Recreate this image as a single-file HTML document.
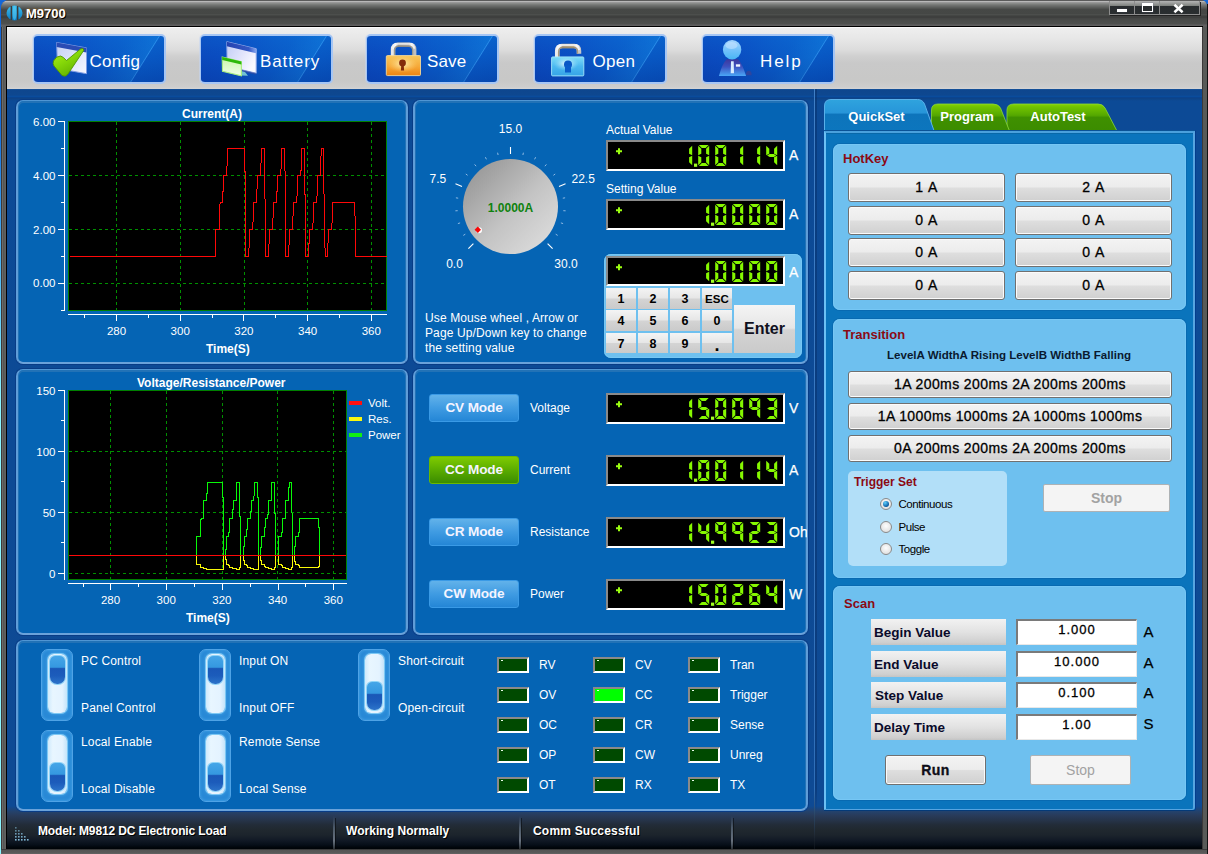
<!DOCTYPE html><html><head><meta charset="utf-8"><title>M9700</title><style>
*{box-sizing:border-box;margin:0;padding:0}
html,body{width:1208px;height:854px;overflow:hidden}
body{position:relative;background:linear-gradient(#1466d6 0,#1a70da 15%,#4ab0f0 30%,#8af4ff 47%,#8af4ff 100%);font-family:"Liberation Sans",sans-serif;font-size:12px;color:#fff}
div{position:absolute;white-space:nowrap}
svg{position:absolute;overflow:visible}
.t{line-height:14px;font-size:12px;color:#fff}
.tb{line-height:14px;font-size:12px;font-weight:bold;color:#fff}
.ax{line-height:12px;font-size:11.5px;color:#fff}
.panel{background:#0564b4;border-style:solid;border-width:1px 2px 2px 2px;border-color:#4f96d4 #5f9dd8 #6aa2da #5f9dd8;border-radius:7px;box-shadow:inset 0 1px 0 1px #2272b6,0 0 0 1px #083c86}
.tbtn{border-style:solid;border-color:#a6c6f4;border-width:2px 2px 2px 1px;box-shadow:-1px 0 0 rgba(196,214,242,.55);border-radius:5px;background:linear-gradient(rgba(20,160,255,.14) 0,rgba(0,0,0,0) 45%,rgba(0,10,90,.16) 100%),linear-gradient(122deg,#0a48bc 0%,#0a4ec2 30%,#0a5cc8 60%,#0d6ad0 78.4%,#2a8ae6 79.0%,#0858c4 79.7%,#0854c0 100%);overflow:hidden}
.tbtn span{position:absolute;font-size:17px;line-height:20px;color:#fff;top:17px}
.gb{background:#6ec0ef;border-radius:7px;box-shadow:inset 0 0 0 1px #76c7f5,0 0 0 1px rgba(4,92,160,.4)}
.wbtn{border:1px solid #707070;border-radius:3px;background:linear-gradient(#f3f3f3 0%,#ececec 48%,#dedede 52%,#d0d0d0 100%);box-shadow:inset 0 0 0 1px #fbfbfb;color:#000;text-align:center;font-size:14px;letter-spacing:.4px;-webkit-text-stroke:.3px #000}
.key{background:linear-gradient(#f4f4f4 0%,#e6e6e6 48%,#d4d4d4 52%,#cacaca 100%);color:#000;text-align:center;font-weight:bold;font-size:12.5px;line-height:22px}
.lab{background:linear-gradient(#f2f2f2 0%,#e2e2e2 50%,#cfcfcf 90%,#c4c4c4 100%);color:#0a0a2a;font-weight:bold;font-size:13.5px;line-height:27px}
.inp{background:#fff;border-top:2px solid #7a7a7a;border-left:2px solid #7a7a7a;border-right:1px solid #e8e8e8;border-bottom:1px solid #e8e8e8;color:#000;text-align:center;font-size:13px;line-height:17.5px;letter-spacing:1px;-webkit-text-stroke:.3px #000}
.disp{background:#000;border-top:2px solid #8a8a8a;border-left:2px solid #8a8a8a;border-right:2px solid #fff;border-bottom:2px solid #fff}
.led{background:#004a00;border-top:2px solid #8a8a8a;border-left:2px solid #8a8a8a;border-right:2px solid #fff;border-bottom:2px solid #fff}
.mode{border-radius:3px;color:#f4f4ff;font-weight:bold;font-size:13.6px;letter-spacing:-.15px;line-height:26.5px;text-align:center}
.mb{background:linear-gradient(#62b2ea 0%,#3f9be2 50%,#2486d6 100%);border:1px solid #3a9ae6}
.mg{background:linear-gradient(#7fcb00 0%,#5aac00 50%,#3b8c00 100%);border:1px solid #6ab800}
.sw{background:#2989d6;border:1px solid #4fa3e6;border-radius:7px;box-shadow:inset 0 0 2px 1px #3797e0}
.slot{background:linear-gradient(90deg,#cfeafc 0%,#e8f6ff 25%,#e4f3ff 75%,#c4e4fa 100%);border-radius:6px;box-shadow:0 0 0 1px #7cc8f4,0 0 3px 1px #4aa8ea}
.knobb{border-radius:5px 5px 7px 7px;background:linear-gradient(#45a6e8 0%,#3598e0 40%,#1a57b7 45%,#1c5cbb 70%,#2c74ca 100%);box-shadow:0 0 0 1px #8fd4f8}
.unit{font-size:14px;line-height:14px;color:#fff;-webkit-text-stroke:.25px #fff}
.mar{color:#8b0a14;font-weight:bold}
</style></head><body>
<div style="left:1207px;top:4px;width:1px;height:850px;background:#111"></div>
<div style="left:1px;top:0px;width:1206px;height:854px;background:#555;border-radius:8px 6px 0 0"></div>
<div style="left:1px;top:0px;width:1206px;height:27px;border-radius:8px 6px 0 0;background:linear-gradient(#5a5a5a 0.5px,#b8b8b8 1.5px,#989898 2.5px,#888a88 3.5px,#7a7c7a 4.5px,#6e706e 5.5px,#646664 6.5px,#5a5c5a 7.5px,#505250 8.5px,#464846 9.5px,#454745 13.5px,#4c4e4c 14.5px,#444644 15.5px,#3e3f3e 16.5px,#3e3f3e 17.5px,#454645 18.5px,#4a4c4a 20.5px,#4e504e 23.5px,#585858 24.5px,#606060 25.5px,#5c5c5c 27px)"></div>
<div style="left:6px;top:26px;width:1197px;height:1px;background:#000"></div>
<div style="left:1px;top:27px;width:6px;height:827px;background:linear-gradient(90deg,#3c3838 0,#3c3838 1px,#6a6a6a 1px,#6a6a6a 2px,#545654 2px,#545654 3px,#5c5c5c 3px,#5c5c5c 4px,#606060 4px,#606060 5px,#000 5px)"></div>
<div style="left:1202px;top:27px;width:5px;height:827px;background:linear-gradient(90deg,#3c3a3a 0,#3c3a3a 1px,#585a58 1px,#585a58 5px)"></div>
<div style="left:1px;top:849px;width:1206px;height:5px;background:linear-gradient(#222 0,#555 1px,#5a5a5a 4px,#666 5px)"></div>
<svg style="left:6px;top:5px" width="17" height="16" viewBox="0 0 17 16"><defs><linearGradient id="ig" x1="0" x2="0" y1="0" y2="1"><stop offset="0" stop-color="#3ec0f0"/><stop offset="1" stop-color="#0a78c0"/></linearGradient></defs><ellipse cx="8.5" cy="8" rx="8" ry="7.6" fill="url(#ig)"/><rect x="4.6" y="1" width="1.6" height="14" fill="#3b3b3b"/><rect x="10.8" y="1" width="1.6" height="14" fill="#3b3b3b"/><ellipse cx="8.5" cy="8" rx="2" ry="7" fill="#5ad0f8" opacity=".55"/></svg>
<div style="left:26px;top:6px;font-weight:bold;font-size:13px;line-height:15px;color:#fff;text-shadow:1px 1px 0 #000,0 0 2px #c07000">M9700</div>
<div style="left:1109px;top:1px;width:26px;height:14px;border:1px solid #8c8c8c;border-top:none;box-shadow:1px 1px 0 #222;background:linear-gradient(#b4b4b4 0,#7c807c 5px,#282c2e 5px,#2a2e30 100%)"><div style="left:7px;top:8px;width:10px;height:3px;background:#fff;box-shadow:0 0 1px #668"></div></div>
<div style="left:1134px;top:1px;width:26px;height:14px;border:1px solid #8c8c8c;border-top:none;box-shadow:1px 1px 0 #222;background:linear-gradient(#b4b4b4 0,#7c807c 5px,#282c2e 5px,#2a2e30 100%)"><div style="left:7px;top:2px;width:11px;height:9px;border:1px solid #fff;border-top:3px solid #fff;box-shadow:0 0 1px #668"></div></div>
<div style="left:1159px;top:1px;width:41px;height:14px;border:1px solid #8c8c8c;border-top:none;box-shadow:1px 1px 0 #222;background:linear-gradient(#b4b4b4 0,#7c807c 5px,#282c2e 5px,#2a2e30 100%)"><svg style="left:13px;top:3px" width="11" height="9" viewBox="0 0 11 9"><path d="M1.4 0.8 L9.6 8.2 M9.6 0.8 L1.4 8.2" stroke="#fff" stroke-width="2.5"/></svg></div>
<div style="left:7px;top:27px;width:1195px;height:62px;background:linear-gradient(#fafafa 0,#fafafa 1px,#eeeeee 1.5px,#e6e6e6 13px,#dcdcdc 23px,#d0d0d0 29px,#c9c9c9 36px,#c8c8c7 53px,#cdcdcd 60px,#d4d4d6 62px)"></div>
<div style="left:7px;top:89px;width:1195px;height:760px;background:linear-gradient(#1a58a0 0,#0e468e 1px,#0e4890 6px,#0a4c9c 7.5px,#0a4490 8.5px,#0e4488 9.5px,#0c4a96 12px,#0e4a94 717px,#24426c 722.5px,#283c5c 726px,#26344a 731px,#222c38 736px,#20282f 741px,#1c242c 746px,#121a26 751px,#060e18 756px,#000408 759px)"></div>
<div class="tbtn" style="left:33px;top:34px;width:133px;height:50px"><div style="left:0;top:-1px;width:130px;height:48px"><svg style="left:19px;top:7px" width="38" height="38" viewBox="0 0 38 38">
<defs><linearGradient id="cg1" x1="0" y1="0" x2="1" y2="1"><stop offset="0" stop-color="#c4d0f4"/><stop offset="1" stop-color="#f6f6ff"/></linearGradient>
<linearGradient id="cg2" x1="0" y1="0" x2=".6" y2="1"><stop offset="0" stop-color="#b4f020"/><stop offset=".5" stop-color="#86d808"/><stop offset="1" stop-color="#62b000"/></linearGradient></defs>
<path d="M3.6 0.5 L33.5 5.9 L33.5 31.7 L4.5 26.5 Z" fill="url(#cg1)" stroke="#7f9ce4" stroke-width="1"/>
<path d="M3.6 0.5 L33.5 5.9 L33.5 10.4 L3.6 5 Z" fill="#2a4cb4"/>
<path d="M0.5 19 Q3 14 7.5 14 Q10 14.5 13.5 18.5 L27.5 7 Q30 5.5 31 8 L15 32 Q12.5 35.5 9 33.5 L1 24 Q-0.5 21.5 0.5 19 Z" fill="url(#cg2)" stroke="#4f9400" stroke-width=".9"/>
</svg><span style="left:55.5px;letter-spacing:0.25px">Config</span></div></div>
<div class="tbtn" style="left:200px;top:34px;width:133px;height:50px"><div style="left:0;top:-1px;width:130px;height:48px"><svg style="left:20px;top:6px" width="38" height="38" viewBox="0 0 38 38">
<defs><linearGradient id="bg1" x1="0" y1="0" x2="1" y2=".6"><stop offset="0" stop-color="#c0ccf4"/><stop offset=".6" stop-color="#e4e6fc"/><stop offset="1" stop-color="#fafaff"/></linearGradient>
<linearGradient id="bg2" x1="0" y1="0" x2="0" y2="1"><stop offset="0" stop-color="#c8f4a8"/><stop offset="1" stop-color="#f0ffe8"/></linearGradient>
<linearGradient id="bg3" x1="0" y1="0" x2="1" y2="0"><stop offset="0" stop-color="#2442b0"/><stop offset=".75" stop-color="#3558c4"/><stop offset="1" stop-color="#86a6ee"/></linearGradient></defs>
<path d="M5.8 0.7 L35.2 7.7 L35.2 32.2 L6.2 25.3 Z" fill="url(#bg1)" stroke="#90a8e8" stroke-width="1"/>
<path d="M5.8 0.7 L35.2 7.7 L35.2 12.3 L5.8 5.3 Z" fill="url(#bg3)"/>
<path d="M20.4 30.5 L35 33.8 L35 32 L20.4 28.6Z" fill="#3a4a9a" opacity=".55"/>
<path d="M20 34.5 L27 34.8 L24 31 L20 30Z" fill="#8ee0d8" opacity=".8"/>
<path d="M1.2 16 L20.4 20.6 L20.4 34.9 L1.5 30.3 Z" fill="url(#bg2)" stroke="#a8ec80" stroke-width="1.1"/>
<path d="M1.2 16 L20.4 20.6 L20.4 23.5 L1.2 18.9 Z" fill="#2cb808"/>
</svg><span style="left:59px;letter-spacing:0.9px">Battery</span></div></div>
<div class="tbtn" style="left:366px;top:34px;width:133px;height:50px"><div style="left:0;top:-1px;width:130px;height:48px"><svg style="left:19px;top:7px" width="38" height="36" viewBox="0 0 38 36">
<defs><linearGradient id="sg1" x1="0" y1="0" x2="0" y2="1"><stop offset="0" stop-color="#f8c85c"/><stop offset=".55" stop-color="#f6a838"/><stop offset="1" stop-color="#ee8410"/></linearGradient>
<radialGradient id="sg3" cx=".48" cy=".42" r=".45"><stop offset="0" stop-color="#fff0b8" stop-opacity=".95"/><stop offset="1" stop-color="#fbd070" stop-opacity="0"/></radialGradient>
<linearGradient id="sg2" x1="0" y1="0" x2="1" y2="0"><stop offset="0" stop-color="#e8e8e8"/><stop offset=".12" stop-color="#fdfdfd"/><stop offset=".25" stop-color="#a8a49c"/><stop offset=".75" stop-color="#b8b4ac"/><stop offset=".88" stop-color="#fafafa"/><stop offset="1" stop-color="#c0c0c0"/></linearGradient></defs>
<path d="M7 15 V7.6 Q7 2.6 12 2.6 H23.2 Q28.2 2.6 28.2 7.6 V15" fill="none" stroke="url(#sg2)" stroke-width="4.4"/>
<path d="M7 7.6 Q7 2.6 12 2.6 H23.2 Q28.2 2.6 28.2 7.6" fill="none" stroke="#f4f4f4" stroke-width="2" opacity=".8" transform="translate(0,-.8)"/>
<path d="M8.5 15 V8.2 Q8.5 4.2 12.5 4.2 H22.7 Q26.7 4.2 26.7 8.2 V15" fill="none" stroke="#8e8a7e" stroke-width="1.5" opacity=".85"/>
<rect x=".3" y="13.6" width="34.2" height="20" rx="1.2" fill="url(#sg1)" stroke="#f4d89a" stroke-width=".9"/>
<rect x=".8" y="14" width="33.2" height="19" fill="url(#sg3)"/>
<circle cx="16.5" cy="21" r="3.4" fill="#842a0a"/><path d="M15.3 22 h2.4 l.4 6.6 h-3.2z" fill="#842a0a"/>
</svg><span style="left:60px;letter-spacing:0.15px">Save</span></div></div>
<div class="tbtn" style="left:534px;top:34px;width:133px;height:50px"><div style="left:0;top:-1px;width:130px;height:48px"><svg style="left:16px;top:7px" width="38" height="36" viewBox="0 0 38 36">
<defs><linearGradient id="og1" x1="0" y1="0" x2="0" y2="1"><stop offset="0" stop-color="#7edcf8"/><stop offset=".5" stop-color="#4ab8f0"/><stop offset="1" stop-color="#36a4e6"/></linearGradient>
<radialGradient id="og3" cx=".45" cy=".35" r=".4"><stop offset="0" stop-color="#ffffff" stop-opacity=".9"/><stop offset="1" stop-color="#a0e4fa" stop-opacity="0"/></radialGradient>
<linearGradient id="og2" x1="0" y1="0" x2="1" y2="0"><stop offset="0" stop-color="#ececec"/><stop offset=".12" stop-color="#fdfdfd"/><stop offset=".25" stop-color="#b0a48c"/><stop offset=".75" stop-color="#c0b090"/><stop offset=".9" stop-color="#fafafa"/><stop offset="1" stop-color="#c8c8c8"/></linearGradient></defs>
<path d="M6.2 16 V9 Q6.2 4 11.2 4 H23 Q28 4 28 9 V11.8" fill="none" stroke="url(#og2)" stroke-width="4.5"/>
<path d="M6.2 9 Q6.2 4 11.2 4 H23 Q28 4 28 9" fill="none" stroke="#f8f8f8" stroke-width="2" opacity=".8" transform="translate(0,-.9)"/>
<path d="M7.7 16 V9.6 Q7.7 5.6 11.7 5.6 H22.5 Q26.5 5.6 26.5 9.6 V11.8" fill="none" stroke="#9a8a6a" stroke-width="1.5" opacity=".85"/>
<rect x=".6" y="14.9" width="32.2" height="19" rx="1" fill="url(#og1)" stroke="#a4e6fa" stroke-width=".9"/>
<rect x="1" y="15.3" width="31.4" height="18" fill="url(#og3)"/>
<circle cx="17" cy="22.6" r="4" fill="#0a58c6"/><path d="M14 23.5 h6 l0 7 h-6z" fill="#0a5cca"/>
</svg><span style="left:57.5px;letter-spacing:0.25px">Open</span></div></div>
<div class="tbtn" style="left:702px;top:34px;width:133px;height:50px"><div style="left:0;top:-1px;width:130px;height:48px"><svg style="left:16px;top:5px" width="36" height="40" viewBox="0 0 36 40">
<defs><linearGradient id="hg1" x1="0" y1="0" x2="0" y2="1"><stop offset="0" stop-color="#a6d6ff"/><stop offset=".5" stop-color="#74c2fb"/><stop offset="1" stop-color="#48b6f4"/></linearGradient>
<linearGradient id="hg2" x1="0" y1="0" x2="0" y2="1"><stop offset="0" stop-color="#3c369c"/><stop offset=".45" stop-color="#3c52c0"/><stop offset="1" stop-color="#4aa6f6"/></linearGradient></defs>
<path d="M27 35.3 q-.5 -4.5 3 -4.5 q3 .4 2.6 4.5z" fill="#34449a" opacity=".85"/>
<path d="M-0.1 35.9 Q3 24 7.7 19.2 L19 19.2 Q23.5 24 27.1 35.9 Z" fill="url(#hg2)"/>
<ellipse cx="13.1" cy="9.7" rx="9.2" ry="9.7" fill="url(#hg1)"/>
<ellipse cx="12.5" cy="5.5" rx="6" ry="3.5" fill="#c8e4ff" opacity=".55"/>
<path d="M12 21.3 h2.7 l.3 11.9 h-3.3z" fill="#d8ecff"/>
<rect x="16.9" y="24.3" width="4.3" height="2.4" fill="#f0f6ff"/>
</svg><span style="left:57px;letter-spacing:1.9px">Help</span></div></div>
<div class="panel" style="left:16px;top:100px;width:392px;height:264px;"></div>
<div class="panel" style="left:413px;top:100px;width:395px;height:264px;"></div>
<div class="panel" style="left:16px;top:369px;width:392px;height:266px;"></div>
<div class="panel" style="left:413px;top:369px;width:395px;height:266px;"></div>
<div class="panel" style="left:16px;top:640px;width:792px;height:171px;"></div>
<div style="left:814px;top:89px;width:1px;height:760px;background:linear-gradient(#3f7fc6 0,#2f6fb8 700px,#2c4868 725px,#222c38 745px,#0a1018 760px)"></div>
<div style="left:815px;top:89px;width:2px;height:722px;background:linear-gradient(rgba(0,20,60,.25) 700px,rgba(0,20,60,0))"></div>
<div style="left:68px;top:121px;width:319px;height:190px;background:#000;border:1px solid #008000"></div>
<svg style="left:0;top:0" width="1208" height="854" viewBox="0 0 1208 854" shape-rendering="crispEdges"><path d="M116.5 122V310" stroke="#009000" stroke-width="1" stroke-dasharray="3 3"/><path d="M180.5 122V310" stroke="#009000" stroke-width="1" stroke-dasharray="3 3"/><path d="M244.5 122V310" stroke="#009000" stroke-width="1" stroke-dasharray="3 3"/><path d="M307.5 122V310" stroke="#009000" stroke-width="1" stroke-dasharray="3 3"/><path d="M371.5 122V310" stroke="#009000" stroke-width="1" stroke-dasharray="3 3"/><path d="M69 175.5H386" stroke="#009000" stroke-width="1" stroke-dasharray="3 3"/><path d="M69 229.5H386" stroke="#009000" stroke-width="1" stroke-dasharray="3 3"/><path d="M69 283.5H386" stroke="#009000" stroke-width="1" stroke-dasharray="3 3"/><path d="M64.5 121V311M58 121.5H64M58 175.5H64M58 229.5H64M58 283.5H64M61 148.5H64M61 202.5H64M61 256.5H64M61 310.5H64" stroke="#fff" stroke-width="1" fill="none"/><path d="M68 314.5H387M84.5 314V318M116.5 314V321M148.5 314V318M180.5 314V321M212.5 314V318M243.5 314V321M275.5 314V318M307.5 314V321M339.5 314V318M371.5 314V321" stroke="#fff" stroke-width="1" fill="none"/></svg>
<svg style="left:0;top:0" width="1208" height="854" viewBox="0 0 1208 854" shape-rendering="crispEdges"><polyline points="69.5,256.5 215.5,256.5 215.5,229.5 219.5,229.5 219.5,205.5 220.5,202.5 222.5,202.5 222.5,191.5 223.5,191.5 223.5,175.5 226.5,175.5 226.5,166.5 227.5,165.5 227.5,148.5 244.5,148.5 244.5,171.5 245.5,171.5 245.5,256.5 248.5,256.5 248.5,248.5 249.5,247.5 249.5,229.5 252.5,229.5 252.5,222.5 253.5,221.5 253.5,202.5 256.5,202.5 256.5,189.5 257.5,188.5 257.5,175.5 260.5,175.5 260.5,163.5 261.5,162.5 261.5,148.5 264.5,148.5 264.5,198.5 265.5,199.5 265.5,256.5 268.5,256.5 268.5,244.5 269.5,243.5 269.5,229.5 272.5,229.5 272.5,218.5 273.5,217.5 273.5,202.5 276.5,202.5 276.5,191.5 277.5,191.5 277.5,175.5 280.5,175.5 280.5,169.5 281.5,168.5 281.5,148.5 284.5,148.5 284.5,170.5 285.5,171.5 285.5,256.5 288.5,256.5 288.5,245.5 289.5,244.5 289.5,229.5 292.5,229.5 292.5,216.5 293.5,215.5 293.5,202.5 296.5,202.5 296.5,202.5 296.5,196.5 297.5,195.5 297.5,175.5 300.5,175.5 300.5,170.5 301.5,170.5 301.5,148.5 304.5,148.5 304.5,194.5 305.5,194.5 305.5,256.5 308.5,256.5 308.5,243.5 309.5,243.5 309.5,229.5 312.5,229.5 312.5,223.5 313.5,222.5 313.5,202.5 316.5,202.5 316.5,196.5 317.5,195.5 317.5,175.5 320.5,175.5 320.5,156.5 321.5,155.5 321.5,148.5 323.5,148.5 323.5,193.5 324.5,194.5 324.5,247.5 325.5,248.5 325.5,256.5 327.5,256.5 327.5,243.5 328.5,242.5 328.5,229.5 331.5,229.5 331.5,223.5 332.5,222.5 332.5,202.5 354.5,202.5 354.5,215.5 355.5,216.5 355.5,256.5 386.5,256.5" fill="none" stroke="#ff0808" stroke-width="1"/></svg>
<div class="tb" style="left:182px;top:107px;">Current(A)</div>
<div class="tb" style="left:206px;top:342px;">Time(S)</div>
<div class="ax" style="left:20px;width:35.5px;text-align:right;top:115.9px">6.00</div>
<div class="ax" style="left:20px;width:35.5px;text-align:right;top:169.7px">4.00</div>
<div class="ax" style="left:20px;width:35.5px;text-align:right;top:223.5px">2.00</div>
<div class="ax" style="left:20px;width:35.5px;text-align:right;top:277.3px">0.00</div>
<div class="ax" style="left:96.5px;width:40px;text-align:center;top:324.5px">280</div>
<div class="ax" style="left:160.2px;width:40px;text-align:center;top:324.5px">300</div>
<div class="ax" style="left:223.9px;width:40px;text-align:center;top:324.5px">320</div>
<div class="ax" style="left:287.6px;width:40px;text-align:center;top:324.5px">340</div>
<div class="ax" style="left:351.3px;width:40px;text-align:center;top:324.5px">360</div>
<div style="left:68px;top:390px;width:279px;height:190px;background:#000;border:1px solid #008000"></div>
<svg style="left:0;top:0" width="1208" height="854" viewBox="0 0 1208 854" shape-rendering="crispEdges"><path d="M110.5 391V579" stroke="#009000" stroke-width="1" stroke-dasharray="3 3"/><path d="M166.5 391V579" stroke="#009000" stroke-width="1" stroke-dasharray="3 3"/><path d="M222.5 391V579" stroke="#009000" stroke-width="1" stroke-dasharray="3 3"/><path d="M277.5 391V579" stroke="#009000" stroke-width="1" stroke-dasharray="3 3"/><path d="M333.5 391V579" stroke="#009000" stroke-width="1" stroke-dasharray="3 3"/><path d="M69 451.5H346" stroke="#009000" stroke-width="1" stroke-dasharray="3 3"/><path d="M69 512.5H346" stroke="#009000" stroke-width="1" stroke-dasharray="3 3"/><path d="M69 573.5H346" stroke="#009000" stroke-width="1" stroke-dasharray="3 3"/><path d="M64.5 390V580M58 390.5H64M58 451.5H64M58 512.5H64M58 573.5H64M61 420.5H64M61 481.5H64M61 542.5H64" stroke="#fff" stroke-width="1" fill="none"/><path d="M68 583.5H347M83.5 583V587M110.5 583V590M138.5 583V587M166.5 583V590M194.5 583V587M222.5 583V590M250.5 583V587M278.5 583V590M305.5 583V587M333.5 583V590" stroke="#fff" stroke-width="1" fill="none"/></svg>
<svg style="left:0;top:0" width="1208" height="854" viewBox="0 0 1208 854" shape-rendering="crispEdges"><polyline points="196.5,555.5 196.5,552.5 196.5,549.5 196.5,546.5 196.5,543.5 196.5,539.5 196.5,536.5 197.5,536.5 198.5,536.5 198.5,536.5 199.5,536.5 199.5,536.5 200.5,536.5 200.5,534.5 200.5,531.5 200.5,528.5 200.5,526.5 200.5,523.5 200.5,520.5 200.5,520.5 200.5,519.5 200.5,519.5 200.5,519.5 201.5,519.5 201.5,518.5 201.5,518.5 201.5,518.5 202.5,518.5 202.5,518.5 202.5,518.5 203.5,518.5 203.5,517.5 203.5,516.5 203.5,515.5 203.5,513.5 203.5,512.5 203.5,511.5 203.5,511.5 203.5,511.5 203.5,511.5 203.5,511.5 203.5,511.5 203.5,511.5 203.5,509.5 203.5,507.5 203.5,505.5 203.5,504.5 203.5,502.5 203.5,500.5 204.5,500.5 204.5,500.5 205.5,500.5 205.5,500.5 206.5,500.5 206.5,500.5 206.5,499.5 206.5,498.5 206.5,497.5 206.5,496.5 206.5,495.5 206.5,494.5 206.5,494.5 206.5,494.5 206.5,493.5 207.5,493.5 207.5,493.5 207.5,493.5 207.5,491.5 207.5,489.5 207.5,487.5 207.5,485.5 207.5,484.5 207.5,482.5 209.5,482.5 212.5,482.5 214.5,482.5 217.5,482.5 219.5,482.5 222.5,482.5 222.5,484.5 222.5,487.5 222.5,489.5 222.5,492.5 222.5,494.5 222.5,497.5 222.5,497.5 222.5,497.5 222.5,497.5 222.5,497.5 223.5,497.5 223.5,497.5 223.5,507.5 223.5,516.5 223.5,526.5 223.5,536.5 223.5,545.5 223.5,555.5 223.5,555.5 224.5,555.5 224.5,555.5 224.5,555.5 225.5,555.5 225.5,555.5 225.5,554.5 225.5,553.5 225.5,552.5 225.5,551.5 225.5,550.5 225.5,549.5 225.5,549.5 225.5,549.5 226.5,549.5 226.5,549.5 226.5,549.5 226.5,549.5 226.5,547.5 226.5,545.5 226.5,543.5 226.5,541.5 226.5,538.5 226.5,536.5 226.5,536.5 227.5,536.5 227.5,536.5 228.5,536.5 228.5,536.5 228.5,536.5 228.5,536.5 228.5,535.5 228.5,534.5 228.5,533.5 228.5,533.5 228.5,532.5 229.5,532.5 229.5,532.5 229.5,532.5 229.5,532.5 229.5,532.5 229.5,531.5 229.5,529.5 229.5,527.5 229.5,525.5 229.5,523.5 229.5,520.5 229.5,518.5 230.5,518.5 230.5,518.5 231.5,518.5 231.5,518.5 232.5,518.5 232.5,518.5 232.5,517.5 232.5,515.5 232.5,514.5 232.5,512.5 232.5,511.5 232.5,509.5 232.5,509.5 232.5,509.5 233.5,509.5 233.5,509.5 233.5,509.5 233.5,509.5 233.5,507.5 233.5,506.5 233.5,504.5 233.5,503.5 233.5,501.5 233.5,500.5 233.5,500.5 234.5,500.5 234.5,500.5 235.5,500.5 235.5,500.5 236.5,500.5 236.5,499.5 236.5,497.5 236.5,496.5 236.5,494.5 236.5,493.5 236.5,492.5 236.5,492.5 236.5,491.5 236.5,491.5 236.5,491.5 236.5,491.5 236.5,491.5 236.5,490.5 236.5,488.5 236.5,486.5 236.5,485.5 236.5,483.5 236.5,482.5 237.5,482.5 237.5,482.5 238.5,482.5 238.5,482.5 239.5,482.5 239.5,482.5 239.5,487.5 239.5,493.5 239.5,499.5 239.5,504.5 239.5,510.5 239.5,516.5 239.5,516.5 239.5,516.5 240.5,516.5 240.5,516.5 240.5,516.5 240.5,516.5 240.5,523.5 240.5,529.5 240.5,535.5 240.5,542.5 240.5,548.5 240.5,555.5 241.5,555.5 241.5,555.5 241.5,555.5 242.5,555.5 242.5,555.5 243.5,555.5 243.5,553.5 243.5,552.5 243.5,551.5 243.5,549.5 243.5,548.5 243.5,547.5 243.5,547.5 243.5,547.5 243.5,547.5 243.5,547.5 243.5,546.5 244.5,546.5 244.5,545.5 244.5,543.5 244.5,541.5 244.5,540.5 244.5,538.5 244.5,536.5 244.5,536.5 244.5,536.5 245.5,536.5 245.5,536.5 246.5,536.5 246.5,536.5 246.5,535.5 246.5,534.5 246.5,533.5 246.5,531.5 246.5,530.5 246.5,529.5 246.5,529.5 246.5,529.5 247.5,529.5 247.5,529.5 247.5,529.5 247.5,528.5 247.5,527.5 247.5,525.5 247.5,523.5 247.5,522.5 247.5,520.5 247.5,518.5 247.5,518.5 248.5,518.5 248.5,518.5 249.5,518.5 249.5,518.5 250.5,518.5 250.5,517.5 250.5,516.5 250.5,515.5 250.5,513.5 250.5,512.5 250.5,511.5 250.5,511.5 250.5,511.5 250.5,511.5 250.5,511.5 250.5,511.5 251.5,511.5 251.5,509.5 251.5,507.5 251.5,505.5 251.5,504.5 251.5,502.5 251.5,500.5 251.5,500.5 251.5,500.5 252.5,500.5 252.5,500.5 253.5,500.5 253.5,500.5 253.5,499.5 253.5,499.5 253.5,498.5 253.5,497.5 253.5,496.5 253.5,496.5 253.5,496.5 253.5,496.5 254.5,495.5 254.5,495.5 254.5,495.5 254.5,495.5 254.5,493.5 254.5,491.5 254.5,488.5 254.5,486.5 254.5,484.5 254.5,482.5 254.5,482.5 255.5,482.5 255.5,482.5 256.5,482.5 256.5,482.5 257.5,482.5 257.5,484.5 257.5,487.5 257.5,489.5 257.5,492.5 257.5,494.5 257.5,497.5 257.5,497.5 257.5,497.5 257.5,497.5 257.5,497.5 257.5,497.5 258.5,497.5 258.5,507.5 258.5,516.5 258.5,526.5 258.5,536.5 258.5,545.5 258.5,555.5 258.5,555.5 258.5,555.5 259.5,555.5 259.5,555.5 260.5,555.5 260.5,555.5 260.5,553.5 260.5,552.5 260.5,551.5 260.5,550.5 260.5,549.5 260.5,547.5 260.5,547.5 260.5,547.5 261.5,547.5 261.5,547.5 261.5,547.5 261.5,547.5 261.5,545.5 261.5,543.5 261.5,542.5 261.5,540.5 261.5,538.5 261.5,536.5 261.5,536.5 262.5,536.5 262.5,536.5 263.5,536.5 263.5,536.5 264.5,536.5 264.5,535.5 264.5,533.5 264.5,532.5 264.5,530.5 264.5,529.5 264.5,527.5 264.5,527.5 264.5,527.5 264.5,527.5 264.5,527.5 264.5,527.5 265.5,527.5 265.5,526.5 265.5,524.5 265.5,523.5 265.5,521.5 265.5,520.5 265.5,518.5 265.5,518.5 265.5,518.5 266.5,518.5 266.5,518.5 267.5,518.5 267.5,518.5 267.5,518.5 267.5,518.5 267.5,518.5 267.5,518.5 267.5,518.5 267.5,518.5 267.5,518.5 267.5,517.5 267.5,516.5 267.5,515.5 267.5,515.5 267.5,514.5 267.5,514.5 267.5,514.5 268.5,514.5 268.5,514.5 268.5,514.5 268.5,514.5 268.5,511.5 268.5,509.5 268.5,507.5 268.5,505.5 268.5,502.5 268.5,500.5 268.5,500.5 269.5,500.5 269.5,500.5 270.5,500.5 270.5,500.5 271.5,500.5 271.5,499.5 271.5,499.5 271.5,498.5 271.5,498.5 271.5,497.5 271.5,497.5 271.5,497.5 271.5,497.5 271.5,496.5 271.5,496.5 271.5,496.5 271.5,496.5 271.5,494.5 271.5,491.5 271.5,489.5 271.5,486.5 271.5,484.5 271.5,482.5 272.5,482.5 272.5,482.5 273.5,482.5 273.5,482.5 274.5,482.5 274.5,482.5 274.5,487.5 274.5,492.5 274.5,497.5 274.5,502.5 274.5,507.5 274.5,513.5 274.5,513.5 274.5,513.5 275.5,513.5 275.5,513.5 275.5,513.5 275.5,513.5 275.5,520.5 275.5,527.5 275.5,534.5 275.5,541.5 275.5,548.5 275.5,555.5 275.5,555.5 276.5,555.5 276.5,555.5 277.5,555.5 277.5,555.5 278.5,555.5 278.5,553.5 278.5,552.5 278.5,551.5 278.5,549.5 278.5,548.5 278.5,546.5 278.5,546.5 278.5,546.5 278.5,546.5 278.5,546.5 278.5,546.5 278.5,546.5 278.5,544.5 278.5,543.5 278.5,541.5 278.5,540.5 278.5,538.5 278.5,536.5 279.5,536.5 279.5,536.5 280.5,536.5 280.5,536.5 281.5,536.5 281.5,536.5 281.5,536.5 281.5,535.5 281.5,534.5 281.5,534.5 281.5,533.5 281.5,532.5 281.5,532.5 281.5,532.5 281.5,532.5 282.5,532.5 282.5,532.5 282.5,532.5 282.5,530.5 282.5,527.5 282.5,525.5 282.5,523.5 282.5,521.5 282.5,518.5 282.5,518.5 283.5,518.5 283.5,518.5 284.5,518.5 284.5,518.5 285.5,518.5 285.5,518.5 285.5,517.5 285.5,516.5 285.5,515.5 285.5,515.5 285.5,514.5 285.5,514.5 285.5,514.5 285.5,514.5 285.5,514.5 285.5,514.5 285.5,514.5 285.5,511.5 285.5,509.5 285.5,507.5 285.5,505.5 285.5,502.5 285.5,500.5 286.5,500.5 286.5,500.5 287.5,500.5 287.5,500.5 288.5,500.5 288.5,500.5 288.5,498.5 288.5,496.5 288.5,493.5 288.5,491.5 288.5,489.5 288.5,487.5 288.5,487.5 288.5,487.5 289.5,487.5 289.5,486.5 289.5,486.5 289.5,486.5 289.5,486.5 289.5,485.5 289.5,484.5 289.5,483.5 289.5,482.5 289.5,482.5 289.5,482.5 290.5,482.5 290.5,482.5 290.5,482.5 290.5,482.5 291.5,482.5 291.5,487.5 291.5,492.5 291.5,497.5 291.5,502.5 291.5,507.5 291.5,512.5 291.5,512.5 291.5,512.5 291.5,512.5 291.5,512.5 292.5,513.5 292.5,513.5 292.5,519.5 292.5,525.5 292.5,531.5 292.5,537.5 292.5,543.5 292.5,549.5 292.5,549.5 292.5,549.5 292.5,549.5 292.5,549.5 292.5,549.5 292.5,549.5 292.5,550.5 292.5,551.5 292.5,552.5 292.5,553.5 292.5,554.5 292.5,555.5 293.5,555.5 293.5,555.5 293.5,555.5 294.5,555.5 294.5,555.5 294.5,555.5 294.5,553.5 294.5,552.5 294.5,550.5 294.5,549.5 294.5,547.5 294.5,546.5 294.5,546.5 294.5,546.5 295.5,546.5 295.5,546.5 295.5,545.5 295.5,545.5 295.5,544.5 295.5,542.5 295.5,541.5 295.5,539.5 295.5,538.5 295.5,536.5 296.5,536.5 296.5,536.5 296.5,536.5 297.5,536.5 297.5,536.5 298.5,536.5 298.5,536.5 298.5,535.5 298.5,534.5 298.5,534.5 298.5,533.5 298.5,532.5 298.5,532.5 298.5,532.5 298.5,532.5 298.5,532.5 298.5,532.5 299.5,532.5 299.5,530.5 299.5,527.5 299.5,525.5 299.5,523.5 299.5,521.5 299.5,518.5 302.5,518.5 305.5,518.5 308.5,518.5 311.5,518.5 315.5,518.5 318.5,518.5 318.5,520.5 318.5,521.5 318.5,523.5 318.5,524.5 318.5,526.5 318.5,527.5 318.5,527.5 318.5,527.5 318.5,527.5 318.5,527.5 318.5,527.5 319.5,527.5 319.5,532.5 319.5,537.5 319.5,541.5 319.5,546.5 319.5,550.5 319.5,555.5" fill="none" stroke="#08f808" stroke-width="1"/><polyline points="196.5,555.5 196.5,557.5 196.5,559.5 196.5,561.5 196.5,562.5 196.5,563.5 196.5,564.5 197.5,564.5 198.5,564.5 198.5,564.5 199.5,564.5 199.5,564.5 200.5,564.5 200.5,564.5 200.5,565.5 200.5,565.5 200.5,566.5 200.5,566.5 200.5,567.5 200.5,567.5 200.5,567.5 200.5,567.5 200.5,567.5 201.5,567.5 201.5,567.5 201.5,567.5 201.5,567.5 202.5,567.5 202.5,567.5 202.5,567.5 203.5,567.5 203.5,567.5 203.5,567.5 203.5,567.5 203.5,567.5 203.5,567.5 203.5,568.5 203.5,568.5 203.5,568.5 203.5,568.5 203.5,568.5 203.5,568.5 203.5,568.5 203.5,568.5 203.5,568.5 203.5,568.5 203.5,568.5 203.5,568.5 203.5,568.5 204.5,568.5 204.5,568.5 205.5,568.5 205.5,568.5 206.5,568.5 206.5,568.5 206.5,568.5 206.5,568.5 206.5,569.5 206.5,569.5 206.5,569.5 206.5,569.5 206.5,569.5 206.5,569.5 206.5,569.5 207.5,569.5 207.5,569.5 207.5,569.5 207.5,569.5 207.5,569.5 207.5,569.5 207.5,569.5 207.5,569.5 207.5,569.5 209.5,569.5 212.5,569.5 214.5,569.5 217.5,569.5 219.5,569.5 222.5,569.5 222.5,569.5 222.5,569.5 222.5,569.5 222.5,569.5 222.5,569.5 222.5,569.5 222.5,569.5 222.5,569.5 222.5,569.5 222.5,569.5 223.5,569.5 223.5,569.5 223.5,568.5 223.5,567.5 223.5,566.5 223.5,564.5 223.5,561.5 223.5,555.5 223.5,555.5 224.5,555.5 224.5,555.5 224.5,555.5 225.5,555.5 225.5,555.5 225.5,556.5 225.5,556.5 225.5,557.5 225.5,558.5 225.5,558.5 225.5,559.5 225.5,559.5 225.5,559.5 226.5,559.5 226.5,559.5 226.5,559.5 226.5,559.5 226.5,560.5 226.5,561.5 226.5,562.5 226.5,563.5 226.5,563.5 226.5,564.5 226.5,564.5 227.5,564.5 227.5,564.5 228.5,564.5 228.5,564.5 228.5,564.5 228.5,564.5 228.5,564.5 228.5,564.5 228.5,564.5 228.5,565.5 228.5,565.5 229.5,565.5 229.5,565.5 229.5,565.5 229.5,565.5 229.5,565.5 229.5,565.5 229.5,565.5 229.5,566.5 229.5,566.5 229.5,566.5 229.5,567.5 229.5,567.5 230.5,567.5 230.5,567.5 231.5,567.5 231.5,567.5 232.5,567.5 232.5,567.5 232.5,567.5 232.5,567.5 232.5,567.5 232.5,567.5 232.5,568.5 232.5,568.5 232.5,568.5 232.5,568.5 233.5,568.5 233.5,568.5 233.5,568.5 233.5,568.5 233.5,568.5 233.5,568.5 233.5,568.5 233.5,568.5 233.5,568.5 233.5,568.5 233.5,568.5 234.5,568.5 234.5,568.5 235.5,568.5 235.5,568.5 236.5,568.5 236.5,568.5 236.5,569.5 236.5,569.5 236.5,569.5 236.5,569.5 236.5,569.5 236.5,569.5 236.5,569.5 236.5,569.5 236.5,569.5 236.5,569.5 236.5,569.5 236.5,569.5 236.5,569.5 236.5,569.5 236.5,569.5 236.5,569.5 236.5,569.5 237.5,569.5 237.5,569.5 238.5,569.5 238.5,569.5 239.5,569.5 239.5,569.5 239.5,569.5 239.5,569.5 239.5,568.5 239.5,568.5 239.5,568.5 239.5,567.5 239.5,567.5 239.5,567.5 240.5,567.5 240.5,567.5 240.5,567.5 240.5,567.5 240.5,566.5 240.5,565.5 240.5,564.5 240.5,562.5 240.5,559.5 240.5,555.5 241.5,555.5 241.5,555.5 241.5,555.5 242.5,555.5 242.5,555.5 243.5,555.5 243.5,556.5 243.5,557.5 243.5,558.5 243.5,559.5 243.5,559.5 243.5,560.5 243.5,560.5 243.5,560.5 243.5,560.5 243.5,560.5 243.5,560.5 244.5,560.5 244.5,561.5 244.5,562.5 244.5,562.5 244.5,563.5 244.5,563.5 244.5,564.5 244.5,564.5 244.5,564.5 245.5,564.5 245.5,564.5 246.5,564.5 246.5,564.5 246.5,564.5 246.5,564.5 246.5,565.5 246.5,565.5 246.5,565.5 246.5,565.5 246.5,565.5 246.5,565.5 247.5,565.5 247.5,565.5 247.5,565.5 247.5,565.5 247.5,566.5 247.5,566.5 247.5,566.5 247.5,566.5 247.5,567.5 247.5,567.5 247.5,567.5 248.5,567.5 248.5,567.5 249.5,567.5 249.5,567.5 250.5,567.5 250.5,567.5 250.5,567.5 250.5,567.5 250.5,567.5 250.5,567.5 250.5,568.5 250.5,568.5 250.5,568.5 250.5,568.5 250.5,568.5 250.5,568.5 251.5,568.5 251.5,568.5 251.5,568.5 251.5,568.5 251.5,568.5 251.5,568.5 251.5,568.5 251.5,568.5 251.5,568.5 252.5,568.5 252.5,568.5 253.5,568.5 253.5,568.5 253.5,568.5 253.5,568.5 253.5,568.5 253.5,569.5 253.5,569.5 253.5,569.5 253.5,569.5 253.5,569.5 254.5,569.5 254.5,569.5 254.5,569.5 254.5,569.5 254.5,569.5 254.5,569.5 254.5,569.5 254.5,569.5 254.5,569.5 254.5,569.5 254.5,569.5 255.5,569.5 255.5,569.5 256.5,569.5 256.5,569.5 257.5,569.5 257.5,569.5 257.5,569.5 257.5,569.5 257.5,569.5 257.5,569.5 257.5,569.5 257.5,569.5 257.5,569.5 257.5,569.5 257.5,569.5 257.5,569.5 258.5,569.5 258.5,568.5 258.5,567.5 258.5,566.5 258.5,564.5 258.5,561.5 258.5,555.5 258.5,555.5 258.5,555.5 259.5,555.5 259.5,555.5 260.5,555.5 260.5,555.5 260.5,556.5 260.5,557.5 260.5,558.5 260.5,559.5 260.5,559.5 260.5,560.5 260.5,560.5 260.5,560.5 261.5,560.5 261.5,560.5 261.5,560.5 261.5,560.5 261.5,561.5 261.5,562.5 261.5,562.5 261.5,563.5 261.5,563.5 261.5,564.5 261.5,564.5 262.5,564.5 262.5,564.5 263.5,564.5 263.5,564.5 264.5,564.5 264.5,564.5 264.5,564.5 264.5,565.5 264.5,565.5 264.5,565.5 264.5,566.5 264.5,566.5 264.5,566.5 264.5,566.5 264.5,566.5 264.5,566.5 265.5,566.5 265.5,566.5 265.5,566.5 265.5,566.5 265.5,566.5 265.5,567.5 265.5,567.5 265.5,567.5 265.5,567.5 266.5,567.5 266.5,567.5 267.5,567.5 267.5,567.5 267.5,567.5 267.5,567.5 267.5,567.5 267.5,567.5 267.5,567.5 267.5,567.5 267.5,567.5 267.5,567.5 267.5,567.5 267.5,567.5 267.5,567.5 267.5,567.5 267.5,567.5 267.5,567.5 268.5,567.5 268.5,567.5 268.5,567.5 268.5,567.5 268.5,567.5 268.5,568.5 268.5,568.5 268.5,568.5 268.5,568.5 268.5,568.5 268.5,568.5 269.5,568.5 269.5,568.5 270.5,568.5 270.5,568.5 271.5,568.5 271.5,568.5 271.5,568.5 271.5,568.5 271.5,568.5 271.5,569.5 271.5,569.5 271.5,569.5 271.5,569.5 271.5,569.5 271.5,569.5 271.5,569.5 271.5,569.5 271.5,569.5 271.5,569.5 271.5,569.5 271.5,569.5 271.5,569.5 271.5,569.5 272.5,569.5 272.5,569.5 273.5,569.5 273.5,569.5 274.5,569.5 274.5,569.5 274.5,569.5 274.5,569.5 274.5,569.5 274.5,568.5 274.5,568.5 274.5,567.5 274.5,567.5 274.5,567.5 275.5,567.5 275.5,567.5 275.5,567.5 275.5,567.5 275.5,567.5 275.5,566.5 275.5,564.5 275.5,563.5 275.5,560.5 275.5,555.5 275.5,555.5 276.5,555.5 276.5,555.5 277.5,555.5 277.5,555.5 278.5,555.5 278.5,556.5 278.5,557.5 278.5,558.5 278.5,559.5 278.5,560.5 278.5,560.5 278.5,560.5 278.5,560.5 278.5,560.5 278.5,561.5 278.5,561.5 278.5,561.5 278.5,561.5 278.5,562.5 278.5,562.5 278.5,563.5 278.5,563.5 278.5,564.5 279.5,564.5 279.5,564.5 280.5,564.5 280.5,564.5 281.5,564.5 281.5,564.5 281.5,564.5 281.5,564.5 281.5,564.5 281.5,564.5 281.5,565.5 281.5,565.5 281.5,565.5 281.5,565.5 281.5,565.5 282.5,565.5 282.5,565.5 282.5,565.5 282.5,565.5 282.5,566.5 282.5,566.5 282.5,566.5 282.5,567.5 282.5,567.5 282.5,567.5 283.5,567.5 283.5,567.5 284.5,567.5 284.5,567.5 285.5,567.5 285.5,567.5 285.5,567.5 285.5,567.5 285.5,567.5 285.5,567.5 285.5,567.5 285.5,567.5 285.5,567.5 285.5,567.5 285.5,567.5 285.5,567.5 285.5,567.5 285.5,567.5 285.5,568.5 285.5,568.5 285.5,568.5 285.5,568.5 285.5,568.5 286.5,568.5 286.5,568.5 287.5,568.5 287.5,568.5 288.5,568.5 288.5,568.5 288.5,568.5 288.5,569.5 288.5,569.5 288.5,569.5 288.5,569.5 288.5,569.5 288.5,569.5 288.5,569.5 289.5,569.5 289.5,569.5 289.5,569.5 289.5,569.5 289.5,569.5 289.5,569.5 289.5,569.5 289.5,569.5 289.5,569.5 289.5,569.5 289.5,569.5 290.5,569.5 290.5,569.5 290.5,569.5 290.5,569.5 291.5,569.5 291.5,569.5 291.5,569.5 291.5,569.5 291.5,568.5 291.5,568.5 291.5,567.5 291.5,567.5 291.5,567.5 291.5,567.5 291.5,567.5 292.5,567.5 292.5,567.5 292.5,567.5 292.5,566.5 292.5,565.5 292.5,564.5 292.5,562.5 292.5,559.5 292.5,559.5 292.5,559.5 292.5,559.5 292.5,559.5 292.5,559.5 292.5,559.5 292.5,558.5 292.5,558.5 292.5,557.5 292.5,556.5 292.5,556.5 292.5,555.5 293.5,555.5 293.5,555.5 293.5,555.5 294.5,555.5 294.5,555.5 294.5,555.5 294.5,556.5 294.5,557.5 294.5,558.5 294.5,559.5 294.5,560.5 294.5,561.5 294.5,561.5 294.5,561.5 295.5,561.5 295.5,561.5 295.5,561.5 295.5,561.5 295.5,561.5 295.5,562.5 295.5,563.5 295.5,563.5 295.5,563.5 295.5,564.5 296.5,564.5 296.5,564.5 296.5,564.5 297.5,564.5 297.5,564.5 298.5,564.5 298.5,564.5 298.5,564.5 298.5,564.5 298.5,564.5 298.5,565.5 298.5,565.5 298.5,565.5 298.5,565.5 298.5,565.5 298.5,565.5 298.5,565.5 299.5,565.5 299.5,565.5 299.5,566.5 299.5,566.5 299.5,566.5 299.5,567.5 299.5,567.5 302.5,567.5 305.5,567.5 308.5,567.5 311.5,567.5 315.5,567.5 318.5,567.5 318.5,567.5 318.5,566.5 318.5,566.5 318.5,566.5 318.5,566.5 318.5,566.5 318.5,566.5 318.5,566.5 318.5,566.5 318.5,566.5 318.5,566.5 319.5,566.5 319.5,565.5 319.5,564.5 319.5,562.5 319.5,561.5 319.5,558.5 319.5,555.5" fill="none" stroke="#f8f808" stroke-width="1"/><path d="M69 555.5H346" stroke="#ff0808" stroke-width="1"/></svg>
<div class="tb" style="left:137px;top:376px;">Voltage/Resistance/Power</div>
<div class="tb" style="left:186px;top:611px;">Time(S)</div>
<div class="ax" style="left:20px;width:35.5px;text-align:right;top:385.2px">150</div>
<div class="ax" style="left:20px;width:35.5px;text-align:right;top:446.0px">100</div>
<div class="ax" style="left:20px;width:35.5px;text-align:right;top:506.8px">50</div>
<div class="ax" style="left:20px;width:35.5px;text-align:right;top:567.6px">0</div>
<div class="ax" style="left:90.5px;width:40px;text-align:center;top:593.5px">280</div>
<div class="ax" style="left:146.2px;width:40px;text-align:center;top:593.5px">300</div>
<div class="ax" style="left:201.9px;width:40px;text-align:center;top:593.5px">320</div>
<div class="ax" style="left:257.6px;width:40px;text-align:center;top:593.5px">340</div>
<div class="ax" style="left:313.3px;width:40px;text-align:center;top:593.5px">360</div>
<div style="left:349px;top:401px;width:13px;height:4px;background:#ff1010"></div>
<div class="ax" style="left:368px;top:396.6px">Volt.</div>
<div style="left:349px;top:417px;width:13px;height:4px;background:#f8f810"></div>
<div class="ax" style="left:368px;top:412.6px">Res.</div>
<div style="left:349px;top:433px;width:13px;height:4px;background:#10f010"></div>
<div class="ax" style="left:368px;top:428.6px">Power</div>
<div style="left:463px;top:159px;width:95px;height:95px;border-radius:50%;background:linear-gradient(135deg,#8f8f8f 0%,#a6a6a6 25%,#c4c4c4 55%,#e2e2e2 100%)"></div>
<svg style="left:0;top:0" width="1208" height="854" viewBox="0 0 1208 854"><path d="M473.4 243.6L468.4 248.6" stroke="#fff" stroke-width="1.1"/><path d="M465.3 234.2L463.3 235.4" stroke="#9cc2e8" stroke-width="0.9"/><path d="M460.1 222.9L457.9 223.6" stroke="#9cc2e8" stroke-width="0.9"/><path d="M457.7 210.7L455.4 210.8" stroke="#9cc2e8" stroke-width="0.9"/><path d="M458.2 198.2L455.9 197.8" stroke="#9cc2e8" stroke-width="0.9"/><path d="M462.0 186.4L455.5 183.7" stroke="#fff" stroke-width="1.1"/><path d="M467.6 175.3L465.8 174.0" stroke="#9cc2e8" stroke-width="0.9"/><path d="M476.1 166.2L474.6 164.4" stroke="#9cc2e8" stroke-width="0.9"/><path d="M486.4 159.3L485.4 157.2" stroke="#9cc2e8" stroke-width="0.9"/><path d="M498.1 155.0L497.6 152.7" stroke="#9cc2e8" stroke-width="0.9"/><path d="M510.5 154.0L510.5 147.0" stroke="#fff" stroke-width="1.1"/><path d="M522.9 155.0L523.4 152.7" stroke="#9cc2e8" stroke-width="0.9"/><path d="M534.6 159.3L535.6 157.2" stroke="#9cc2e8" stroke-width="0.9"/><path d="M544.9 166.2L546.4 164.4" stroke="#9cc2e8" stroke-width="0.9"/><path d="M553.4 175.3L555.2 174.0" stroke="#9cc2e8" stroke-width="0.9"/><path d="M559.0 186.4L565.5 183.7" stroke="#fff" stroke-width="1.1"/><path d="M562.8 198.2L565.1 197.8" stroke="#9cc2e8" stroke-width="0.9"/><path d="M563.3 210.7L565.6 210.8" stroke="#9cc2e8" stroke-width="0.9"/><path d="M560.9 222.9L563.1 223.6" stroke="#9cc2e8" stroke-width="0.9"/><path d="M555.7 234.2L557.7 235.4" stroke="#9cc2e8" stroke-width="0.9"/><path d="M547.6 243.6L552.6 248.6" stroke="#fff" stroke-width="1.1"/><circle cx="479" cy="230.2" r="3" fill="#fff"/><path d="M477.8 226.6 L481 229.8 L477.8 233 L474.6 229.8Z" fill="#f80808"/></svg>
<div style="left:480.5px;top:200.5px;width:60px;text-align:center;font-weight:bold;font-size:12px;line-height:14px;color:#0e820e">1.0000A</div>
<div class="t" style="left:485.5px;width:50px;text-align:center;top:122px">15.0</div>
<div class="t" style="left:412.8px;width:50px;text-align:center;top:171.6px">7.5</div>
<div class="t" style="left:558.2px;width:50px;text-align:center;top:171.6px">22.5</div>
<div class="t" style="left:429.5px;width:50px;text-align:center;top:257px">0.0</div>
<div class="t" style="left:541px;width:50px;text-align:center;top:257px">30.0</div>
<div class="t" style="left:425px;top:311px;line-height:15px;white-space:normal;width:185px;letter-spacing:.12px">Use Mouse wheel , Arrow or<br>Page Up/Down key to change<br>the setting value</div>
<div class="t" style="left:606px;top:123px;">Actual Value</div>
<div class="disp" style="left:606px;top:140px;width:179px;height:31px;"></div>
<svg style="left:0;top:0" width="1208" height="854" viewBox="0 0 1208 854"><polygon transform="translate(681.2,145)" points="11,0.7 7.9,3.8 7.9,8.7 11,10.2" fill="#86f800"/><polygon transform="translate(681.2,145)" points="11,20.3 7.9,17.2 7.9,12.3 11,10.8" fill="#86f800"/><rect x="694.0" y="163.6" width="3.2" height="3.2" fill="#a0ff20"/><polygon transform="translate(698.2,145)" points="0.6,0 10.4,0 7.4,3.1 3.6,3.1" fill="#86f800"/><polygon transform="translate(698.2,145)" points="11,0.7 7.9,3.8 7.9,8.7 11,10.2" fill="#86f800"/><polygon transform="translate(698.2,145)" points="11,20.3 7.9,17.2 7.9,12.3 11,10.8" fill="#86f800"/><polygon transform="translate(698.2,145)" points="0.6,21 10.4,21 7.4,17.9 3.6,17.9" fill="#86f800"/><polygon transform="translate(698.2,145)" points="0,20.3 3.1,17.2 3.1,12.3 0,10.8" fill="#86f800"/><polygon transform="translate(698.2,145)" points="0,0.7 3.1,3.8 3.1,8.7 0,10.2" fill="#86f800"/><polygon transform="translate(715.2,145)" points="0.6,0 10.4,0 7.4,3.1 3.6,3.1" fill="#86f800"/><polygon transform="translate(715.2,145)" points="11,0.7 7.9,3.8 7.9,8.7 11,10.2" fill="#86f800"/><polygon transform="translate(715.2,145)" points="11,20.3 7.9,17.2 7.9,12.3 11,10.8" fill="#86f800"/><polygon transform="translate(715.2,145)" points="0.6,21 10.4,21 7.4,17.9 3.6,17.9" fill="#86f800"/><polygon transform="translate(715.2,145)" points="0,20.3 3.1,17.2 3.1,12.3 0,10.8" fill="#86f800"/><polygon transform="translate(715.2,145)" points="0,0.7 3.1,3.8 3.1,8.7 0,10.2" fill="#86f800"/><polygon transform="translate(732.2,145)" points="11,0.7 7.9,3.8 7.9,8.7 11,10.2" fill="#86f800"/><polygon transform="translate(732.2,145)" points="11,20.3 7.9,17.2 7.9,12.3 11,10.8" fill="#86f800"/><polygon transform="translate(749.2,145)" points="11,0.7 7.9,3.8 7.9,8.7 11,10.2" fill="#86f800"/><polygon transform="translate(749.2,145)" points="11,20.3 7.9,17.2 7.9,12.3 11,10.8" fill="#86f800"/><polygon transform="translate(766.2,145)" points="0,0.7 3.1,3.8 3.1,8.7 0,10.2" fill="#86f800"/><polygon transform="translate(766.2,145)" points="0.9,10.5 3.4,9 7.6,9 10.1,10.5 7.6,12 3.4,12" fill="#86f800"/><polygon transform="translate(766.2,145)" points="11,0.7 7.9,3.8 7.9,8.7 11,10.2" fill="#86f800"/><polygon transform="translate(766.2,145)" points="11,20.3 7.9,17.2 7.9,12.3 11,10.8" fill="#86f800"/><path d="M616 151.2h6M619 148.2v6" stroke="#9cff10" stroke-width="2"/></svg>
<div class="unit" style="left:789px;top:148px;">A</div>
<div class="t" style="left:606px;top:182px;">Setting Value</div>
<div class="disp" style="left:606px;top:199px;width:179px;height:31px;"></div>
<svg style="left:0;top:0" width="1208" height="854" viewBox="0 0 1208 854"><polygon transform="translate(698.2,204)" points="11,0.7 7.9,3.8 7.9,8.7 11,10.2" fill="#86f800"/><polygon transform="translate(698.2,204)" points="11,20.3 7.9,17.2 7.9,12.3 11,10.8" fill="#86f800"/><rect x="711.0" y="222.6" width="3.2" height="3.2" fill="#a0ff20"/><polygon transform="translate(715.2,204)" points="0.6,0 10.4,0 7.4,3.1 3.6,3.1" fill="#86f800"/><polygon transform="translate(715.2,204)" points="11,0.7 7.9,3.8 7.9,8.7 11,10.2" fill="#86f800"/><polygon transform="translate(715.2,204)" points="11,20.3 7.9,17.2 7.9,12.3 11,10.8" fill="#86f800"/><polygon transform="translate(715.2,204)" points="0.6,21 10.4,21 7.4,17.9 3.6,17.9" fill="#86f800"/><polygon transform="translate(715.2,204)" points="0,20.3 3.1,17.2 3.1,12.3 0,10.8" fill="#86f800"/><polygon transform="translate(715.2,204)" points="0,0.7 3.1,3.8 3.1,8.7 0,10.2" fill="#86f800"/><polygon transform="translate(732.2,204)" points="0.6,0 10.4,0 7.4,3.1 3.6,3.1" fill="#86f800"/><polygon transform="translate(732.2,204)" points="11,0.7 7.9,3.8 7.9,8.7 11,10.2" fill="#86f800"/><polygon transform="translate(732.2,204)" points="11,20.3 7.9,17.2 7.9,12.3 11,10.8" fill="#86f800"/><polygon transform="translate(732.2,204)" points="0.6,21 10.4,21 7.4,17.9 3.6,17.9" fill="#86f800"/><polygon transform="translate(732.2,204)" points="0,20.3 3.1,17.2 3.1,12.3 0,10.8" fill="#86f800"/><polygon transform="translate(732.2,204)" points="0,0.7 3.1,3.8 3.1,8.7 0,10.2" fill="#86f800"/><polygon transform="translate(749.2,204)" points="0.6,0 10.4,0 7.4,3.1 3.6,3.1" fill="#86f800"/><polygon transform="translate(749.2,204)" points="11,0.7 7.9,3.8 7.9,8.7 11,10.2" fill="#86f800"/><polygon transform="translate(749.2,204)" points="11,20.3 7.9,17.2 7.9,12.3 11,10.8" fill="#86f800"/><polygon transform="translate(749.2,204)" points="0.6,21 10.4,21 7.4,17.9 3.6,17.9" fill="#86f800"/><polygon transform="translate(749.2,204)" points="0,20.3 3.1,17.2 3.1,12.3 0,10.8" fill="#86f800"/><polygon transform="translate(749.2,204)" points="0,0.7 3.1,3.8 3.1,8.7 0,10.2" fill="#86f800"/><polygon transform="translate(766.2,204)" points="0.6,0 10.4,0 7.4,3.1 3.6,3.1" fill="#86f800"/><polygon transform="translate(766.2,204)" points="11,0.7 7.9,3.8 7.9,8.7 11,10.2" fill="#86f800"/><polygon transform="translate(766.2,204)" points="11,20.3 7.9,17.2 7.9,12.3 11,10.8" fill="#86f800"/><polygon transform="translate(766.2,204)" points="0.6,21 10.4,21 7.4,17.9 3.6,17.9" fill="#86f800"/><polygon transform="translate(766.2,204)" points="0,20.3 3.1,17.2 3.1,12.3 0,10.8" fill="#86f800"/><polygon transform="translate(766.2,204)" points="0,0.7 3.1,3.8 3.1,8.7 0,10.2" fill="#86f800"/><path d="M616 210.2h6M619 207.2v6" stroke="#9cff10" stroke-width="2"/></svg>
<div class="unit" style="left:789px;top:207px;">A</div>
<div class="gb" style="left:604px;top:254px;width:198px;height:104px;"></div>
<div class="disp" style="left:606px;top:256px;width:179px;height:30px;"></div>
<svg style="left:0;top:0" width="1208" height="854" viewBox="0 0 1208 854"><polygon transform="translate(698.2,261)" points="11,0.7 7.9,3.8 7.9,8.7 11,10.2" fill="#86f800"/><polygon transform="translate(698.2,261)" points="11,20.3 7.9,17.2 7.9,12.3 11,10.8" fill="#86f800"/><rect x="711.0" y="279.6" width="3.2" height="3.2" fill="#a0ff20"/><polygon transform="translate(715.2,261)" points="0.6,0 10.4,0 7.4,3.1 3.6,3.1" fill="#86f800"/><polygon transform="translate(715.2,261)" points="11,0.7 7.9,3.8 7.9,8.7 11,10.2" fill="#86f800"/><polygon transform="translate(715.2,261)" points="11,20.3 7.9,17.2 7.9,12.3 11,10.8" fill="#86f800"/><polygon transform="translate(715.2,261)" points="0.6,21 10.4,21 7.4,17.9 3.6,17.9" fill="#86f800"/><polygon transform="translate(715.2,261)" points="0,20.3 3.1,17.2 3.1,12.3 0,10.8" fill="#86f800"/><polygon transform="translate(715.2,261)" points="0,0.7 3.1,3.8 3.1,8.7 0,10.2" fill="#86f800"/><polygon transform="translate(732.2,261)" points="0.6,0 10.4,0 7.4,3.1 3.6,3.1" fill="#86f800"/><polygon transform="translate(732.2,261)" points="11,0.7 7.9,3.8 7.9,8.7 11,10.2" fill="#86f800"/><polygon transform="translate(732.2,261)" points="11,20.3 7.9,17.2 7.9,12.3 11,10.8" fill="#86f800"/><polygon transform="translate(732.2,261)" points="0.6,21 10.4,21 7.4,17.9 3.6,17.9" fill="#86f800"/><polygon transform="translate(732.2,261)" points="0,20.3 3.1,17.2 3.1,12.3 0,10.8" fill="#86f800"/><polygon transform="translate(732.2,261)" points="0,0.7 3.1,3.8 3.1,8.7 0,10.2" fill="#86f800"/><polygon transform="translate(749.2,261)" points="0.6,0 10.4,0 7.4,3.1 3.6,3.1" fill="#86f800"/><polygon transform="translate(749.2,261)" points="11,0.7 7.9,3.8 7.9,8.7 11,10.2" fill="#86f800"/><polygon transform="translate(749.2,261)" points="11,20.3 7.9,17.2 7.9,12.3 11,10.8" fill="#86f800"/><polygon transform="translate(749.2,261)" points="0.6,21 10.4,21 7.4,17.9 3.6,17.9" fill="#86f800"/><polygon transform="translate(749.2,261)" points="0,20.3 3.1,17.2 3.1,12.3 0,10.8" fill="#86f800"/><polygon transform="translate(749.2,261)" points="0,0.7 3.1,3.8 3.1,8.7 0,10.2" fill="#86f800"/><polygon transform="translate(766.2,261)" points="0.6,0 10.4,0 7.4,3.1 3.6,3.1" fill="#86f800"/><polygon transform="translate(766.2,261)" points="11,0.7 7.9,3.8 7.9,8.7 11,10.2" fill="#86f800"/><polygon transform="translate(766.2,261)" points="11,20.3 7.9,17.2 7.9,12.3 11,10.8" fill="#86f800"/><polygon transform="translate(766.2,261)" points="0.6,21 10.4,21 7.4,17.9 3.6,17.9" fill="#86f800"/><polygon transform="translate(766.2,261)" points="0,20.3 3.1,17.2 3.1,12.3 0,10.8" fill="#86f800"/><polygon transform="translate(766.2,261)" points="0,0.7 3.1,3.8 3.1,8.7 0,10.2" fill="#86f800"/><path d="M616 267.2h6M619 264.2v6" stroke="#9cff10" stroke-width="2"/></svg>
<div class="unit" style="left:789px;top:265px;">A</div>
<div class="key" style="left:606px;top:288px;width:30px;height:21px;">1</div>
<div class="key" style="left:638px;top:288px;width:30px;height:21px;">2</div>
<div class="key" style="left:670px;top:288px;width:30px;height:21px;">3</div>
<div class="key" style="left:702px;top:288px;width:30px;height:21px;font-size:11.5px;letter-spacing:.2px">ESC</div>
<div class="key" style="left:606px;top:310px;width:30px;height:21px;">4</div>
<div class="key" style="left:638px;top:310px;width:30px;height:21px;">5</div>
<div class="key" style="left:670px;top:310px;width:30px;height:21px;">6</div>
<div class="key" style="left:702px;top:310px;width:30px;height:21px;">0</div>
<div class="key" style="left:606px;top:333px;width:30px;height:20px;">7</div>
<div class="key" style="left:638px;top:333px;width:30px;height:20px;">8</div>
<div class="key" style="left:670px;top:333px;width:30px;height:20px;">9</div>
<div class="key" style="left:702px;top:333px;width:30px;height:20px;"><span style="position:relative;top:1px;font-size:18px">.</span></div>
<div class="key" style="left:734px;top:305px;width:61px;height:48px;font-size:16px;line-height:48px;color:#101020">Enter</div>
<div class="mode mb" style="left:429px;top:394px;width:90px;height:28px">CV Mode</div>
<div class="t" style="left:530px;top:401px;">Voltage</div>
<div class="disp" style="left:606px;top:393px;width:179px;height:31px;"></div>
<svg style="left:0;top:0" width="1208" height="854" viewBox="0 0 1208 854"><polygon transform="translate(681.2,398)" points="11,0.7 7.9,3.8 7.9,8.7 11,10.2" fill="#86f800"/><polygon transform="translate(681.2,398)" points="11,20.3 7.9,17.2 7.9,12.3 11,10.8" fill="#86f800"/><polygon transform="translate(698.2,398)" points="0.6,0 10.4,0 7.4,3.1 3.6,3.1" fill="#86f800"/><polygon transform="translate(698.2,398)" points="0,0.7 3.1,3.8 3.1,8.7 0,10.2" fill="#86f800"/><polygon transform="translate(698.2,398)" points="0.9,10.5 3.4,9 7.6,9 10.1,10.5 7.6,12 3.4,12" fill="#86f800"/><polygon transform="translate(698.2,398)" points="11,20.3 7.9,17.2 7.9,12.3 11,10.8" fill="#86f800"/><polygon transform="translate(698.2,398)" points="0.6,21 10.4,21 7.4,17.9 3.6,17.9" fill="#86f800"/><rect x="711.0" y="416.6" width="3.2" height="3.2" fill="#a0ff20"/><polygon transform="translate(715.2,398)" points="0.6,0 10.4,0 7.4,3.1 3.6,3.1" fill="#86f800"/><polygon transform="translate(715.2,398)" points="11,0.7 7.9,3.8 7.9,8.7 11,10.2" fill="#86f800"/><polygon transform="translate(715.2,398)" points="11,20.3 7.9,17.2 7.9,12.3 11,10.8" fill="#86f800"/><polygon transform="translate(715.2,398)" points="0.6,21 10.4,21 7.4,17.9 3.6,17.9" fill="#86f800"/><polygon transform="translate(715.2,398)" points="0,20.3 3.1,17.2 3.1,12.3 0,10.8" fill="#86f800"/><polygon transform="translate(715.2,398)" points="0,0.7 3.1,3.8 3.1,8.7 0,10.2" fill="#86f800"/><polygon transform="translate(732.2,398)" points="0.6,0 10.4,0 7.4,3.1 3.6,3.1" fill="#86f800"/><polygon transform="translate(732.2,398)" points="11,0.7 7.9,3.8 7.9,8.7 11,10.2" fill="#86f800"/><polygon transform="translate(732.2,398)" points="11,20.3 7.9,17.2 7.9,12.3 11,10.8" fill="#86f800"/><polygon transform="translate(732.2,398)" points="0.6,21 10.4,21 7.4,17.9 3.6,17.9" fill="#86f800"/><polygon transform="translate(732.2,398)" points="0,20.3 3.1,17.2 3.1,12.3 0,10.8" fill="#86f800"/><polygon transform="translate(732.2,398)" points="0,0.7 3.1,3.8 3.1,8.7 0,10.2" fill="#86f800"/><polygon transform="translate(749.2,398)" points="0.6,0 10.4,0 7.4,3.1 3.6,3.1" fill="#86f800"/><polygon transform="translate(749.2,398)" points="11,0.7 7.9,3.8 7.9,8.7 11,10.2" fill="#86f800"/><polygon transform="translate(749.2,398)" points="0,0.7 3.1,3.8 3.1,8.7 0,10.2" fill="#86f800"/><polygon transform="translate(749.2,398)" points="0.9,10.5 3.4,9 7.6,9 10.1,10.5 7.6,12 3.4,12" fill="#86f800"/><polygon transform="translate(749.2,398)" points="11,20.3 7.9,17.2 7.9,12.3 11,10.8" fill="#86f800"/><polygon transform="translate(766.2,398)" points="0.6,0 10.4,0 7.4,3.1 3.6,3.1" fill="#86f800"/><polygon transform="translate(766.2,398)" points="11,0.7 7.9,3.8 7.9,8.7 11,10.2" fill="#86f800"/><polygon transform="translate(766.2,398)" points="0.9,10.5 3.4,9 7.6,9 10.1,10.5 7.6,12 3.4,12" fill="#86f800"/><polygon transform="translate(766.2,398)" points="11,20.3 7.9,17.2 7.9,12.3 11,10.8" fill="#86f800"/><polygon transform="translate(766.2,398)" points="0.6,21 10.4,21 7.4,17.9 3.6,17.9" fill="#86f800"/><path d="M616 404.2h6M619 401.2v6" stroke="#9cff10" stroke-width="2"/></svg>
<div class="unit" style="left:789px;top:401px;width:18px;overflow:hidden">V</div>
<div class="mode mg" style="left:429px;top:456px;width:90px;height:28px">CC Mode</div>
<div class="t" style="left:530px;top:463px;">Current</div>
<div class="disp" style="left:606px;top:455px;width:179px;height:31px;"></div>
<svg style="left:0;top:0" width="1208" height="854" viewBox="0 0 1208 854"><polygon transform="translate(681.2,460)" points="11,0.7 7.9,3.8 7.9,8.7 11,10.2" fill="#86f800"/><polygon transform="translate(681.2,460)" points="11,20.3 7.9,17.2 7.9,12.3 11,10.8" fill="#86f800"/><rect x="694.0" y="478.6" width="3.2" height="3.2" fill="#a0ff20"/><polygon transform="translate(698.2,460)" points="0.6,0 10.4,0 7.4,3.1 3.6,3.1" fill="#86f800"/><polygon transform="translate(698.2,460)" points="11,0.7 7.9,3.8 7.9,8.7 11,10.2" fill="#86f800"/><polygon transform="translate(698.2,460)" points="11,20.3 7.9,17.2 7.9,12.3 11,10.8" fill="#86f800"/><polygon transform="translate(698.2,460)" points="0.6,21 10.4,21 7.4,17.9 3.6,17.9" fill="#86f800"/><polygon transform="translate(698.2,460)" points="0,20.3 3.1,17.2 3.1,12.3 0,10.8" fill="#86f800"/><polygon transform="translate(698.2,460)" points="0,0.7 3.1,3.8 3.1,8.7 0,10.2" fill="#86f800"/><polygon transform="translate(715.2,460)" points="0.6,0 10.4,0 7.4,3.1 3.6,3.1" fill="#86f800"/><polygon transform="translate(715.2,460)" points="11,0.7 7.9,3.8 7.9,8.7 11,10.2" fill="#86f800"/><polygon transform="translate(715.2,460)" points="11,20.3 7.9,17.2 7.9,12.3 11,10.8" fill="#86f800"/><polygon transform="translate(715.2,460)" points="0.6,21 10.4,21 7.4,17.9 3.6,17.9" fill="#86f800"/><polygon transform="translate(715.2,460)" points="0,20.3 3.1,17.2 3.1,12.3 0,10.8" fill="#86f800"/><polygon transform="translate(715.2,460)" points="0,0.7 3.1,3.8 3.1,8.7 0,10.2" fill="#86f800"/><polygon transform="translate(732.2,460)" points="11,0.7 7.9,3.8 7.9,8.7 11,10.2" fill="#86f800"/><polygon transform="translate(732.2,460)" points="11,20.3 7.9,17.2 7.9,12.3 11,10.8" fill="#86f800"/><polygon transform="translate(749.2,460)" points="11,0.7 7.9,3.8 7.9,8.7 11,10.2" fill="#86f800"/><polygon transform="translate(749.2,460)" points="11,20.3 7.9,17.2 7.9,12.3 11,10.8" fill="#86f800"/><polygon transform="translate(766.2,460)" points="0,0.7 3.1,3.8 3.1,8.7 0,10.2" fill="#86f800"/><polygon transform="translate(766.2,460)" points="0.9,10.5 3.4,9 7.6,9 10.1,10.5 7.6,12 3.4,12" fill="#86f800"/><polygon transform="translate(766.2,460)" points="11,0.7 7.9,3.8 7.9,8.7 11,10.2" fill="#86f800"/><polygon transform="translate(766.2,460)" points="11,20.3 7.9,17.2 7.9,12.3 11,10.8" fill="#86f800"/><path d="M616 466.2h6M619 463.2v6" stroke="#9cff10" stroke-width="2"/></svg>
<div class="unit" style="left:789px;top:463px;width:18px;overflow:hidden">A</div>
<div class="mode mb" style="left:429px;top:518px;width:90px;height:28px">CR Mode</div>
<div class="t" style="left:530px;top:525px;">Resistance</div>
<div class="disp" style="left:606px;top:517px;width:179px;height:31px;"></div>
<svg style="left:0;top:0" width="1208" height="854" viewBox="0 0 1208 854"><polygon transform="translate(681.2,522)" points="11,0.7 7.9,3.8 7.9,8.7 11,10.2" fill="#86f800"/><polygon transform="translate(681.2,522)" points="11,20.3 7.9,17.2 7.9,12.3 11,10.8" fill="#86f800"/><polygon transform="translate(698.2,522)" points="0,0.7 3.1,3.8 3.1,8.7 0,10.2" fill="#86f800"/><polygon transform="translate(698.2,522)" points="0.9,10.5 3.4,9 7.6,9 10.1,10.5 7.6,12 3.4,12" fill="#86f800"/><polygon transform="translate(698.2,522)" points="11,0.7 7.9,3.8 7.9,8.7 11,10.2" fill="#86f800"/><polygon transform="translate(698.2,522)" points="11,20.3 7.9,17.2 7.9,12.3 11,10.8" fill="#86f800"/><rect x="711.0" y="540.6" width="3.2" height="3.2" fill="#a0ff20"/><polygon transform="translate(715.2,522)" points="0.6,0 10.4,0 7.4,3.1 3.6,3.1" fill="#86f800"/><polygon transform="translate(715.2,522)" points="11,0.7 7.9,3.8 7.9,8.7 11,10.2" fill="#86f800"/><polygon transform="translate(715.2,522)" points="0,0.7 3.1,3.8 3.1,8.7 0,10.2" fill="#86f800"/><polygon transform="translate(715.2,522)" points="0.9,10.5 3.4,9 7.6,9 10.1,10.5 7.6,12 3.4,12" fill="#86f800"/><polygon transform="translate(715.2,522)" points="11,20.3 7.9,17.2 7.9,12.3 11,10.8" fill="#86f800"/><polygon transform="translate(732.2,522)" points="0.6,0 10.4,0 7.4,3.1 3.6,3.1" fill="#86f800"/><polygon transform="translate(732.2,522)" points="11,0.7 7.9,3.8 7.9,8.7 11,10.2" fill="#86f800"/><polygon transform="translate(732.2,522)" points="0,0.7 3.1,3.8 3.1,8.7 0,10.2" fill="#86f800"/><polygon transform="translate(732.2,522)" points="0.9,10.5 3.4,9 7.6,9 10.1,10.5 7.6,12 3.4,12" fill="#86f800"/><polygon transform="translate(732.2,522)" points="11,20.3 7.9,17.2 7.9,12.3 11,10.8" fill="#86f800"/><polygon transform="translate(749.2,522)" points="0.6,0 10.4,0 7.4,3.1 3.6,3.1" fill="#86f800"/><polygon transform="translate(749.2,522)" points="11,0.7 7.9,3.8 7.9,8.7 11,10.2" fill="#86f800"/><polygon transform="translate(749.2,522)" points="0.9,10.5 3.4,9 7.6,9 10.1,10.5 7.6,12 3.4,12" fill="#86f800"/><polygon transform="translate(749.2,522)" points="0,20.3 3.1,17.2 3.1,12.3 0,10.8" fill="#86f800"/><polygon transform="translate(749.2,522)" points="0.6,21 10.4,21 7.4,17.9 3.6,17.9" fill="#86f800"/><polygon transform="translate(766.2,522)" points="0.6,0 10.4,0 7.4,3.1 3.6,3.1" fill="#86f800"/><polygon transform="translate(766.2,522)" points="11,0.7 7.9,3.8 7.9,8.7 11,10.2" fill="#86f800"/><polygon transform="translate(766.2,522)" points="0.9,10.5 3.4,9 7.6,9 10.1,10.5 7.6,12 3.4,12" fill="#86f800"/><polygon transform="translate(766.2,522)" points="11,20.3 7.9,17.2 7.9,12.3 11,10.8" fill="#86f800"/><polygon transform="translate(766.2,522)" points="0.6,21 10.4,21 7.4,17.9 3.6,17.9" fill="#86f800"/><path d="M616 528.2h6M619 525.2v6" stroke="#9cff10" stroke-width="2"/></svg>
<div class="unit" style="left:789px;top:525px;width:18px;overflow:hidden">Oh</div>
<div class="mode mb" style="left:429px;top:580px;width:90px;height:28px">CW Mode</div>
<div class="t" style="left:530px;top:587px;">Power</div>
<div class="disp" style="left:606px;top:579px;width:179px;height:31px;"></div>
<svg style="left:0;top:0" width="1208" height="854" viewBox="0 0 1208 854"><polygon transform="translate(681.2,584)" points="11,0.7 7.9,3.8 7.9,8.7 11,10.2" fill="#86f800"/><polygon transform="translate(681.2,584)" points="11,20.3 7.9,17.2 7.9,12.3 11,10.8" fill="#86f800"/><polygon transform="translate(698.2,584)" points="0.6,0 10.4,0 7.4,3.1 3.6,3.1" fill="#86f800"/><polygon transform="translate(698.2,584)" points="0,0.7 3.1,3.8 3.1,8.7 0,10.2" fill="#86f800"/><polygon transform="translate(698.2,584)" points="0.9,10.5 3.4,9 7.6,9 10.1,10.5 7.6,12 3.4,12" fill="#86f800"/><polygon transform="translate(698.2,584)" points="11,20.3 7.9,17.2 7.9,12.3 11,10.8" fill="#86f800"/><polygon transform="translate(698.2,584)" points="0.6,21 10.4,21 7.4,17.9 3.6,17.9" fill="#86f800"/><rect x="711.0" y="602.6" width="3.2" height="3.2" fill="#a0ff20"/><polygon transform="translate(715.2,584)" points="0.6,0 10.4,0 7.4,3.1 3.6,3.1" fill="#86f800"/><polygon transform="translate(715.2,584)" points="11,0.7 7.9,3.8 7.9,8.7 11,10.2" fill="#86f800"/><polygon transform="translate(715.2,584)" points="11,20.3 7.9,17.2 7.9,12.3 11,10.8" fill="#86f800"/><polygon transform="translate(715.2,584)" points="0.6,21 10.4,21 7.4,17.9 3.6,17.9" fill="#86f800"/><polygon transform="translate(715.2,584)" points="0,20.3 3.1,17.2 3.1,12.3 0,10.8" fill="#86f800"/><polygon transform="translate(715.2,584)" points="0,0.7 3.1,3.8 3.1,8.7 0,10.2" fill="#86f800"/><polygon transform="translate(732.2,584)" points="0.6,0 10.4,0 7.4,3.1 3.6,3.1" fill="#86f800"/><polygon transform="translate(732.2,584)" points="11,0.7 7.9,3.8 7.9,8.7 11,10.2" fill="#86f800"/><polygon transform="translate(732.2,584)" points="0.9,10.5 3.4,9 7.6,9 10.1,10.5 7.6,12 3.4,12" fill="#86f800"/><polygon transform="translate(732.2,584)" points="0,20.3 3.1,17.2 3.1,12.3 0,10.8" fill="#86f800"/><polygon transform="translate(732.2,584)" points="0.6,21 10.4,21 7.4,17.9 3.6,17.9" fill="#86f800"/><polygon transform="translate(749.2,584)" points="0.6,0 10.4,0 7.4,3.1 3.6,3.1" fill="#86f800"/><polygon transform="translate(749.2,584)" points="0,0.7 3.1,3.8 3.1,8.7 0,10.2" fill="#86f800"/><polygon transform="translate(749.2,584)" points="0.9,10.5 3.4,9 7.6,9 10.1,10.5 7.6,12 3.4,12" fill="#86f800"/><polygon transform="translate(749.2,584)" points="0,20.3 3.1,17.2 3.1,12.3 0,10.8" fill="#86f800"/><polygon transform="translate(749.2,584)" points="0.6,21 10.4,21 7.4,17.9 3.6,17.9" fill="#86f800"/><polygon transform="translate(749.2,584)" points="11,20.3 7.9,17.2 7.9,12.3 11,10.8" fill="#86f800"/><polygon transform="translate(766.2,584)" points="0,0.7 3.1,3.8 3.1,8.7 0,10.2" fill="#86f800"/><polygon transform="translate(766.2,584)" points="0.9,10.5 3.4,9 7.6,9 10.1,10.5 7.6,12 3.4,12" fill="#86f800"/><polygon transform="translate(766.2,584)" points="11,0.7 7.9,3.8 7.9,8.7 11,10.2" fill="#86f800"/><polygon transform="translate(766.2,584)" points="11,20.3 7.9,17.2 7.9,12.3 11,10.8" fill="#86f800"/><path d="M616 590.2h6M619 587.2v6" stroke="#9cff10" stroke-width="2"/></svg>
<div class="unit" style="left:789px;top:587px;width:18px;overflow:hidden">W</div>
<div class="sw" style="left:41px;top:649px;width:32px;height:72px;"></div>
<div class="slot" style="left:48px;top:654px;width:19px;height:59px;"></div>
<div class="knobb" style="left:50px;top:656px;width:15px;height:28px;"></div>
<div class="sw" style="left:41px;top:730px;width:32px;height:72px;"></div>
<div class="slot" style="left:48px;top:735px;width:19px;height:59px;"></div>
<div class="knobb" style="left:50px;top:763px;width:15px;height:28px;"></div>
<div class="sw" style="left:199px;top:649px;width:32px;height:72px;"></div>
<div class="slot" style="left:206px;top:654px;width:19px;height:59px;"></div>
<div class="knobb" style="left:208px;top:656px;width:15px;height:28px;"></div>
<div class="sw" style="left:199px;top:730px;width:32px;height:72px;"></div>
<div class="slot" style="left:206px;top:735px;width:19px;height:59px;"></div>
<div class="knobb" style="left:208px;top:763px;width:15px;height:28px;"></div>
<div class="sw" style="left:358px;top:649px;width:32px;height:72px;"></div>
<div class="slot" style="left:365px;top:654px;width:19px;height:59px;"></div>
<div class="knobb" style="left:367px;top:682px;width:15px;height:28px;"></div>
<div class="t" style="left:81px;top:654px;letter-spacing:.15px">PC Control</div>
<div class="t" style="left:81px;top:701px;letter-spacing:.15px">Panel Control</div>
<div class="t" style="left:81px;top:735px;letter-spacing:.15px">Local Enable</div>
<div class="t" style="left:81px;top:782px;letter-spacing:.15px">Local Disable</div>
<div class="t" style="left:239px;top:654px;letter-spacing:.15px">Input ON</div>
<div class="t" style="left:239px;top:701px;letter-spacing:.15px">Input OFF</div>
<div class="t" style="left:239px;top:735px;letter-spacing:.15px">Remote Sense</div>
<div class="t" style="left:239px;top:782px;letter-spacing:.15px">Local Sense</div>
<div class="t" style="left:398px;top:654px;letter-spacing:.15px">Short-circuit</div>
<div class="t" style="left:398px;top:701px;letter-spacing:.15px">Open-circuit</div>
<div class="led" style="left:497px;top:657px;width:32px;height:16px;"><div style="left:2px;top:1px;width:2px;height:1px;background:#e8ffe8"></div></div>
<div class="t" style="left:539px;top:658px;">RV</div>
<div class="led" style="left:497px;top:687px;width:32px;height:16px;"><div style="left:2px;top:1px;width:2px;height:1px;background:#e8ffe8"></div></div>
<div class="t" style="left:539px;top:688px;">OV</div>
<div class="led" style="left:497px;top:717px;width:32px;height:16px;"><div style="left:2px;top:1px;width:2px;height:1px;background:#e8ffe8"></div></div>
<div class="t" style="left:539px;top:718px;">OC</div>
<div class="led" style="left:497px;top:747px;width:32px;height:16px;"><div style="left:2px;top:1px;width:2px;height:1px;background:#e8ffe8"></div></div>
<div class="t" style="left:539px;top:748px;">OP</div>
<div class="led" style="left:497px;top:777px;width:32px;height:16px;"><div style="left:2px;top:1px;width:2px;height:1px;background:#e8ffe8"></div></div>
<div class="t" style="left:539px;top:778px;">OT</div>
<div class="led" style="left:593px;top:657px;width:32px;height:16px;"><div style="left:2px;top:1px;width:2px;height:1px;background:#e8ffe8"></div></div>
<div class="t" style="left:635px;top:658px;">CV</div>
<div class="led" style="left:593px;top:687px;width:32px;height:16px;background:#00ff00;"><div style="left:2px;top:1px;width:2px;height:1px;background:#e8ffe8"></div></div>
<div class="t" style="left:635px;top:688px;">CC</div>
<div class="led" style="left:593px;top:717px;width:32px;height:16px;"><div style="left:2px;top:1px;width:2px;height:1px;background:#e8ffe8"></div></div>
<div class="t" style="left:635px;top:718px;">CR</div>
<div class="led" style="left:593px;top:747px;width:32px;height:16px;"><div style="left:2px;top:1px;width:2px;height:1px;background:#e8ffe8"></div></div>
<div class="t" style="left:635px;top:748px;">CW</div>
<div class="led" style="left:593px;top:777px;width:32px;height:16px;"><div style="left:2px;top:1px;width:2px;height:1px;background:#e8ffe8"></div></div>
<div class="t" style="left:635px;top:778px;">RX</div>
<div class="led" style="left:688px;top:657px;width:32px;height:16px;"><div style="left:2px;top:1px;width:2px;height:1px;background:#e8ffe8"></div></div>
<div class="t" style="left:730px;top:658px;">Tran</div>
<div class="led" style="left:688px;top:687px;width:32px;height:16px;"><div style="left:2px;top:1px;width:2px;height:1px;background:#e8ffe8"></div></div>
<div class="t" style="left:730px;top:688px;">Trigger</div>
<div class="led" style="left:688px;top:717px;width:32px;height:16px;"><div style="left:2px;top:1px;width:2px;height:1px;background:#e8ffe8"></div></div>
<div class="t" style="left:730px;top:718px;">Sense</div>
<div class="led" style="left:688px;top:747px;width:32px;height:16px;"><div style="left:2px;top:1px;width:2px;height:1px;background:#e8ffe8"></div></div>
<div class="t" style="left:730px;top:748px;">Unreg</div>
<div class="led" style="left:688px;top:777px;width:32px;height:16px;"><div style="left:2px;top:1px;width:2px;height:1px;background:#e8ffe8"></div></div>
<div class="t" style="left:730px;top:778px;">TX</div>
<div style="left:332.5px;top:816px;width:2px;height:33px;background:linear-gradient(rgba(110,128,150,0) 0,rgba(110,128,150,.55) 35%,rgba(140,150,162,.7) 75%,rgba(120,130,140,.35) 100%)"></div>
<div style="left:334.5px;top:818px;width:1px;height:31px;background:rgba(0,0,0,.45)"></div>
<div style="left:519px;top:816px;width:2px;height:33px;background:linear-gradient(rgba(110,128,150,0) 0,rgba(110,128,150,.55) 35%,rgba(140,150,162,.7) 75%,rgba(120,130,140,.35) 100%)"></div>
<div style="left:521px;top:818px;width:1px;height:31px;background:rgba(0,0,0,.45)"></div>
<div style="left:731px;top:816px;width:2px;height:33px;background:linear-gradient(rgba(110,128,150,0) 0,rgba(110,128,150,.55) 35%,rgba(140,150,162,.7) 75%,rgba(120,130,140,.35) 100%)"></div>
<div style="left:733px;top:818px;width:1px;height:31px;background:rgba(0,0,0,.45)"></div>
<div class="tb" style="left:38px;top:824px;text-shadow:1px 1px 0 #000;letter-spacing:-0.14px">Model: M9812 DC Electronic Load</div>
<div class="tb" style="left:346px;top:824px;text-shadow:1px 1px 0 #000;letter-spacing:0.05px">Working Normally</div>
<div class="tb" style="left:533px;top:824px;text-shadow:1px 1px 0 #000;letter-spacing:0.2px">Comm Successful</div>
<svg style="left:14px;top:826px" width="16" height="16" viewBox="0 0 16 16"><rect x="1" y="1" width="1.6" height="1.6" fill="#8ecbea" opacity="0.5"/><rect x="1" y="4" width="1.6" height="1.6" fill="#8ecbea" opacity="0.6"/><rect x="4" y="4" width="1.6" height="1.6" fill="#8ecbea" opacity="0.6"/><rect x="1" y="7" width="1.6" height="1.6" fill="#8ecbea" opacity="0.7"/><rect x="4" y="7" width="1.6" height="1.6" fill="#8ecbea" opacity="0.7"/><rect x="7" y="7" width="1.6" height="1.6" fill="#8ecbea" opacity="0.7"/><rect x="1" y="10" width="1.6" height="1.6" fill="#8ecbea" opacity="0.8"/><rect x="4" y="10" width="1.6" height="1.6" fill="#8ecbea" opacity="0.8"/><rect x="7" y="10" width="1.6" height="1.6" fill="#8ecbea" opacity="0.8"/><rect x="10" y="10" width="1.6" height="1.6" fill="#8ecbea" opacity="0.8"/><rect x="1" y="13" width="1.6" height="1.6" fill="#8ecbea" opacity="0.9"/><rect x="4" y="13" width="1.6" height="1.6" fill="#8ecbea" opacity="0.9"/><rect x="7" y="13" width="1.6" height="1.6" fill="#8ecbea" opacity="0.9"/><rect x="10" y="13" width="1.6" height="1.6" fill="#8ecbea" opacity="0.9"/><rect x="13" y="13" width="1.6" height="1.6" fill="#8ecbea" opacity="0.9"/></svg>
<svg style="left:0;top:0" width="1208" height="854" viewBox="0 0 1208 854">
<defs>
<linearGradient id="tq" x1="0" y1="99" x2="0" y2="131" gradientUnits="userSpaceOnUse"><stop offset="0" stop-color="#2fa4de"/><stop offset=".44" stop-color="#2795d9"/><stop offset=".47" stop-color="#0d74bb"/><stop offset="1" stop-color="#0c76be"/></linearGradient>
<linearGradient id="tg" x1="0" y1="104" x2="0" y2="131" gradientUnits="userSpaceOnUse"><stop offset="0" stop-color="#86d400"/><stop offset=".1" stop-color="#72c400"/><stop offset=".42" stop-color="#55a800"/><stop offset=".5" stop-color="#3f9000"/><stop offset="1" stop-color="#3c8c00"/></linearGradient>
</defs>
<path d="M1007 131 L1007 110 Q1007 104 1014 104 L1098 104 Q1103 104 1105 108 L1117 131 Z" fill="url(#tg)" stroke="#8ad838" stroke-width=".8"/>
<path d="M931.5 131 L931.5 110 Q931.5 104 938 104 L993 104 Q998.5 104 1000.5 108 L1009.5 131 Z" fill="url(#tg)" stroke="#8ad838" stroke-width=".8"/>
<path d="M824.5 132 L824.5 106 Q824.5 99.5 831 99.5 L917.5 99.5 Q922.5 99.5 924.5 104 L934.5 132 Z" fill="url(#tq)" stroke="#58b0ea" stroke-width="1"/>
</svg>
<div style="left:824px;top:109px;width:105px;text-align:center;font-weight:bold;font-size:13px;line-height:15px;color:#fff">QuickSet</div>
<div style="left:934px;top:109px;width:66px;text-align:center;font-weight:bold;font-size:13px;line-height:15px;color:#fff">Program</div>
<div style="left:1009px;top:109px;width:98px;text-align:center;font-weight:bold;font-size:13px;line-height:15px;color:#fff">AutoTest</div>
<div style="left:824px;top:130px;width:372px;height:681px;background:#0a74bc;border-style:solid;border-width:1px 1px 1px 0;border-color:#0a5296 #043c8c #043a78 #043c8c;border-radius:0 0 3px 0"><div style="left:0;top:0;width:371px;height:679px;border-style:solid;border-width:2px 2px 1px 2px;border-color:#4aa0dc #56a4e0 #56a4e0 #6cc0f4;border-radius:0 0 3px 0;box-shadow:inset 0 1px 0 #0868a8"></div></div>
<div class="gb" style="left:833px;top:144px;width:353px;height:166px;"></div>
<div class="mar" style="left:843px;top:151px;font-size:13px;line-height:15px">HotKey</div>
<div class="wbtn" style="left:848px;top:173px;width:157px;height:29px;line-height:26.5px;word-spacing:1px">1 A</div>
<div class="wbtn" style="left:1015px;top:173px;width:157px;height:29px;line-height:26.5px;word-spacing:1px">2 A</div>
<div class="wbtn" style="left:848px;top:206px;width:157px;height:29px;line-height:26.5px;word-spacing:1px">0 A</div>
<div class="wbtn" style="left:1015px;top:206px;width:157px;height:29px;line-height:26.5px;word-spacing:1px">0 A</div>
<div class="wbtn" style="left:848px;top:238px;width:157px;height:29px;line-height:26.5px;word-spacing:1px">0 A</div>
<div class="wbtn" style="left:1015px;top:238px;width:157px;height:29px;line-height:26.5px;word-spacing:1px">0 A</div>
<div class="wbtn" style="left:848px;top:271px;width:157px;height:29px;line-height:26.5px;word-spacing:1px">0 A</div>
<div class="wbtn" style="left:1015px;top:271px;width:157px;height:29px;line-height:26.5px;word-spacing:1px">0 A</div>
<div class="gb" style="left:833px;top:319px;width:353px;height:259px;"></div>
<div class="mar" style="left:843px;top:327px;font-size:13px;line-height:15px">Transition</div>
<div style="left:887px;top:348px;font-weight:bold;font-size:11.55px;line-height:14px;color:#0a1a30">LevelA WidthA Rising LevelB WidthB Falling</div>
<div class="wbtn" style="left:848px;top:371px;width:324px;height:27px;line-height:25px">1A 200ms 200ms 2A 200ms 200ms</div>
<div class="wbtn" style="left:848px;top:403px;width:324px;height:27px;line-height:25px">1A 1000ms 1000ms 2A 1000ms 1000ms</div>
<div class="wbtn" style="left:848px;top:435px;width:324px;height:27px;line-height:25px">0A 200ms 200ms 2A 200ms 200ms</div>
<div style="left:848px;top:471px;width:159px;height:95px;background:#b2dff8;border-radius:5px"></div>
<div class="mar" style="left:854px;top:475px;font-size:12px;line-height:14px">Trigger Set</div>
<div style="left:880px;top:498px;width:12px;height:12px;border-radius:50%;border:1px solid #8a8a8a;background:radial-gradient(circle at 50% 40%,#fdfdfd,#d8d8d8)"><div style="left:2px;top:2px;width:6px;height:6px;border-radius:50%;background:radial-gradient(circle at 35% 30%,#5fd0ff,#0a5aa0 70%)"></div></div>
<div style="left:898.5px;top:497px;font-size:11.5px;line-height:14px;color:#000;letter-spacing:-.45px">Continuous</div>
<div style="left:880px;top:521px;width:12px;height:12px;border-radius:50%;border:1px solid #8a8a8a;background:radial-gradient(circle at 50% 40%,#fdfdfd,#d8d8d8)"></div>
<div style="left:898.5px;top:520px;font-size:11.5px;line-height:14px;color:#000;letter-spacing:-.45px">Pulse</div>
<div style="left:880px;top:543px;width:12px;height:12px;border-radius:50%;border:1px solid #8a8a8a;background:radial-gradient(circle at 50% 40%,#fdfdfd,#d8d8d8)"></div>
<div style="left:898.5px;top:542px;font-size:11.5px;line-height:14px;color:#000;letter-spacing:-.45px">Toggle</div>
<div style="left:1043px;top:484px;width:127px;height:28px;border:1px solid #adb2b5;border-radius:2px;background:#f4f4f4;color:#a2a2a2;text-align:center;font-size:14px;line-height:26px;font-weight:bold">Stop</div>
<div class="gb" style="left:833px;top:586px;width:353px;height:214px;"></div>
<div class="mar" style="left:844px;top:596px;font-size:13px;line-height:15px">Scan</div>
<div class="lab" style="left:871px;top:619px;width:135px;height:26px;padding-left:3px">Begin Value</div>
<div class="inp" style="left:1016px;top:619px;width:121px;height:26px">1.000</div>
<div style="left:1143.5px;top:624.1px;font-size:15px;line-height:15px;color:#000;-webkit-text-stroke:.25px #000">A</div>
<div class="lab" style="left:871px;top:651px;width:135px;height:26px;padding-left:3px">End Value</div>
<div class="inp" style="left:1016px;top:651px;width:121px;height:26px">10.000</div>
<div style="left:1143.5px;top:654.7px;font-size:15px;line-height:15px;color:#000;-webkit-text-stroke:.25px #000">A</div>
<div class="lab" style="left:871px;top:682px;width:135px;height:26px;padding-left:4px">Step Value</div>
<div class="inp" style="left:1016px;top:682px;width:121px;height:26px">0.100</div>
<div style="left:1143.5px;top:685.3px;font-size:15px;line-height:15px;color:#000;-webkit-text-stroke:.25px #000">A</div>
<div class="lab" style="left:871px;top:714px;width:135px;height:26px;padding-left:3px">Delay Time</div>
<div class="inp" style="left:1016px;top:714px;width:121px;height:26px">1.00</div>
<div style="left:1143.5px;top:716.3px;font-size:15px;line-height:15px;color:#000;-webkit-text-stroke:.25px #000">S</div>
<div class="wbtn" style="left:885px;top:755px;width:101px;height:30px;line-height:28px;font-weight:bold;color:#101020">Run</div>
<div style="left:1030px;top:755px;width:101px;height:30px;border:1px solid #adb2b5;border-radius:2px;background:#f4f4f4;color:#a2a2a2;text-align:center;font-size:14px;line-height:28px">Stop</div>
</body></html>
